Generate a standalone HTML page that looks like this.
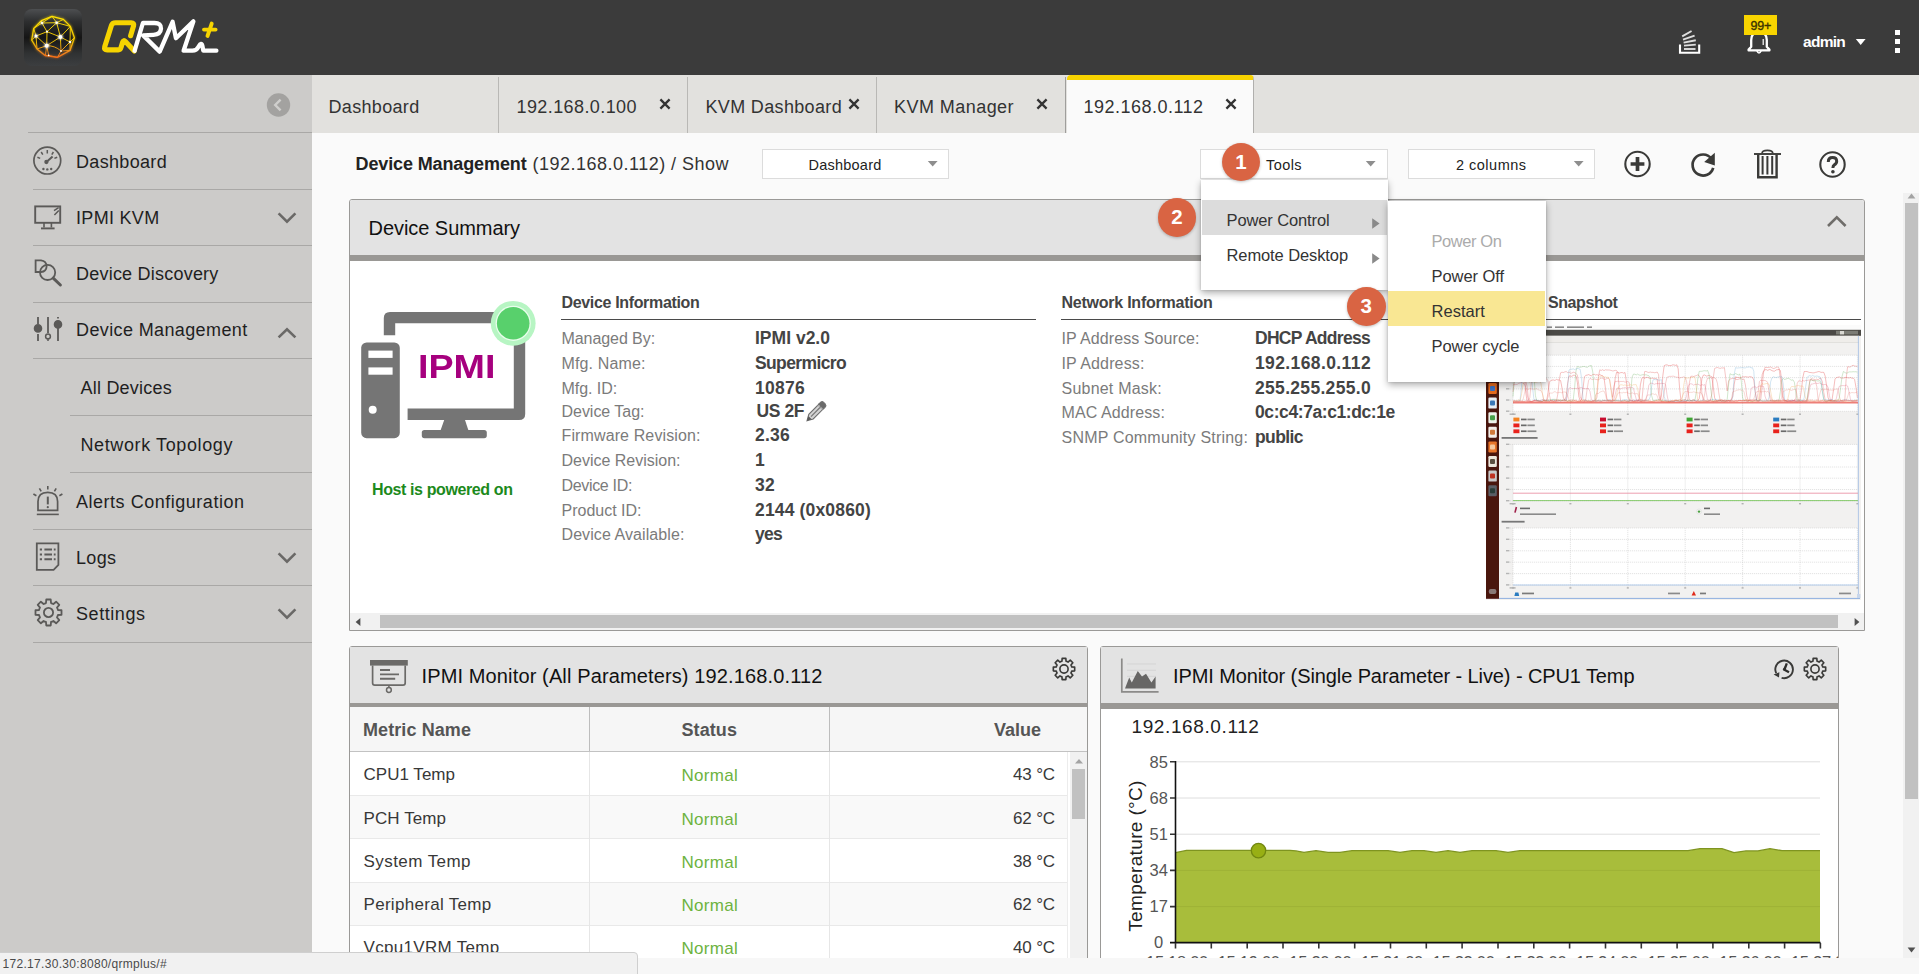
<!DOCTYPE html>
<html><head>
<meta charset="utf-8">
<title>QRM+</title>
<style>
*{box-sizing:border-box;margin:0;padding:0}
html,body{width:1919px;height:974px;overflow:hidden;background:#fafafa;font-family:"Liberation Sans",sans-serif;color:#222}
.abs{position:absolute}
#hdr{position:absolute;left:0;top:0;width:1919px;height:75px;background:#3b3b3b}
#side{position:absolute;left:0;top:75px;width:312px;height:899px;background:#cccbc9}
#tabbar{position:absolute;left:312px;top:75px;width:1607px;height:58px;background:#e2e1de}
#content{position:absolute;left:312px;top:133px;width:1607px;height:841px;background:#fafafa}
.t{position:absolute;white-space:nowrap;line-height:1}
/*SIDEBAR*/
.nav{position:absolute;left:76px;font-size:18px;color:#1f1f1f;white-space:nowrap;line-height:1}
.sep{position:absolute;height:1px;background:#a9a8a6}
/*TABS*/
.tab{position:absolute;top:78px;height:55px;font-size:18px;color:#333;line-height:1}
.tabsep{position:absolute;top:78px;width:1px;height:55px;background:#c9c8c5}
.x{position:absolute;font-size:17px;font-weight:bold;color:#333;line-height:1}
</style>
</head>
<body>
<div id="hdr"></div>
<div id="side"></div>
<div id="tabbar"></div>
<div id="content"></div>
<!--HEADER-->
<svg class="abs" style="left:24px;top:9px" width="58" height="57" viewBox="0 0 58 57">
<defs>
<linearGradient id="lgb" x1="0" y1="0" x2="0" y2="1"><stop offset="0" stop-color="#4d4f51"></stop><stop offset="0.22" stop-color="#2d2e2f"></stop><stop offset="0.5" stop-color="#151515"></stop><stop offset="0.78" stop-color="#303233"></stop><stop offset="1" stop-color="#3c3e40"></stop></linearGradient>
<linearGradient id="lgs" gradientUnits="userSpaceOnUse" x1="0" y1="7" x2="0" y2="49"><stop offset="0" stop-color="#ffe100"></stop><stop offset="0.6" stop-color="#f2c400"></stop><stop offset="0.85" stop-color="#f08a1c"></stop><stop offset="1" stop-color="#ef6a1a"></stop></linearGradient>
<filter id="glow" x="-20%" y="-20%" width="140%" height="140%"><feGaussianBlur stdDeviation="0.9"></feGaussianBlur></filter>
</defs>
<rect x="0" y="0" width="58" height="57" rx="8" fill="url(#lgb)"></rect>
<g fill="none" stroke="url(#lgs)" stroke-width="2.2" opacity="0.5" filter="url(#glow)">
<polygon points="28,7.3 39.4,10.4 46.4,17.4 50.4,28.7 46.1,41.4 33.4,48.4 21.4,46.7 13,40 7.7,31 9.7,19.4 17.4,11.7"></polygon>
</g>
<g fill="none" stroke="url(#lgs)" stroke-width="0.95" stroke-linejoin="round" gradientUnits="userSpaceOnUse">
<polygon points="28,7.3 39.4,10.4 46.4,17.4 50.4,28.7 46.1,41.4 33.4,48.4 21.4,46.7 13,40 7.7,31 9.7,19.4 17.4,11.7" stroke-width="1.3"></polygon>
<path d="M28,7.3 L18,14 M28,7.3 L32.7,13.7 M18,14 L32.7,13.7 M17.4,11.7 L18,14 M32.7,13.7 L39.4,10.4 M32.7,13.7 L46.4,17.4 M18,14 L9.7,19.4 M18,14 L23,22.7 M32.7,13.7 L23,22.7 M32.7,13.7 L36.4,28 M23,22.7 L12,27 M23,22.7 L36.4,28 M23,22.7 L22.7,36.7 M12,27 L9.7,19.4 M12,27 L7.7,31 M12,27 L22.7,36.7 M12,27 L13,40 M36.4,28 L46.4,17.4 M36.4,28 L46,33 M36.4,28 L22.7,36.7 M36.4,28 L37,42 M46,33 L50.4,28.7 M46,33 L46.4,17.4 M46,33 L46.1,41.4 M46,33 L37,42 M22.7,36.7 L13,40 M22.7,36.7 L24.7,46.4 M37,42 L33.4,48.4 M37,42 L46.1,41.4 M24.7,46.4 L21.4,46.7 M24.7,46.4 L33.4,48.4 M22.7,36.7 L21.4,46.7 M22.7,36.7 Q31,36.5 37,42"></path>
</g>
<g fill="#fff" filter="url(#glow)" opacity="0.9">
<circle cx="12" cy="27" r="2"></circle><circle cx="36.4" cy="28" r="2.5"></circle><circle cx="22.7" cy="36.7" r="2.5"></circle><circle cx="18" cy="14" r="1.5"></circle><circle cx="32.7" cy="13.7" r="1.5"></circle>
</g>
<g fill="#fff">
<circle cx="18" cy="14" r="1.1"></circle><circle cx="32.7" cy="13.7" r="1.2"></circle><circle cx="23" cy="22.7" r="1.1"></circle><circle cx="12" cy="27" r="1.5"></circle><circle cx="36.4" cy="28" r="1.9"></circle><circle cx="22.7" cy="36.7" r="1.9"></circle><circle cx="46" cy="33" r="1.3"></circle><circle cx="37" cy="42" r="0.9"></circle><circle cx="24.7" cy="46.4" r="0.8"></circle>
</g>
</svg>
<svg class="abs" style="left:96px;top:12px" width="130" height="50" viewBox="96 12 130 50">
<g fill="none" stroke-linecap="round" stroke-linejoin="round">
<path d="M130.6,35.7 L133.6,25.8 Q134.4,22.7 131.2,22.7 L115.6,22.7 Q112.3,22.7 111.5,25.2 L104.7,46.7 Q103.8,49.9 107.2,49.9 L118.3,49.9 Q120.4,49.9 121.1,47.2 L122.7,42 Q123.6,39.6 125.4,41.5 L134.3,51" stroke="#f6d400" stroke-width="5.1"></path>
<path d="M134.6,50.8 L142.9,23 L154.5,23 Q161.3,23 161,28.6 Q160.6,34.4 153.5,34.8 L143.2,35.4 L159.7,51.6 L172.6,21.8 L175.9,38.2 L193.4,21.4 L183.6,50.7 L192.4,50.7 Q196.6,50.7 198.6,46.6 Q201.4,41.6 202.4,46 L203.3,50.7 L216.4,50.7" stroke="#ffffff" stroke-width="4.3"></path>
<path d="M204,29.6 L215.6,29.6 M211.7,23.6 L207.5,36" stroke="#f6d400" stroke-width="3.9"></path>
</g>
</svg>
<!-- tray icon -->
<svg class="abs" style="left:1677px;top:28px" width="26" height="28" viewBox="1677 28 26 28">
<path d="M1680,44.5 L1680,52.8 L1699.2,52.8 L1699.2,44.5" fill="none" stroke="#fff" stroke-width="2.1"></path>
<g stroke="#dedede" stroke-width="1.9" fill="none">
<path d="M1684,49 L1695.5,49"></path><path d="M1684,45.6 L1695.8,44.6"></path><path d="M1683.6,42.6 L1695.8,40.2"></path><path d="M1683,39.6 L1694.6,35.6"></path><path d="M1682.2,36.4 L1691.6,31"></path>
</g>
</svg>
<!-- bell -->
<svg class="abs" style="left:1745px;top:30px" width="28" height="26" viewBox="1745 30 28 26">
<path d="M1751.2,46.8 L1751.2,40 Q1751.2,32.4 1759,32.4 Q1766.8,32.4 1766.8,40 L1766.8,46.8 L1769.4,49.6 L1769.4,50.4 L1748.6,50.4 L1748.6,49.6 Z" fill="none" stroke="#fff" stroke-width="2.3" stroke-linejoin="round"></path>
<path d="M1763.2,39 L1763.2,45" stroke="#fff" stroke-width="1.2"></path>
<path d="M1756.8,50.6 Q1759,55.4 1761.2,50.6" fill="none" stroke="#fff" stroke-width="1.5"></path>
</svg>
<div class="abs" style="left:1744px;top:15px;width:33px;height:20px;background:#f8d400"></div>
<span class="t" style="left: 1750.5px; top: 20px; font-size: 12.5px; color: rgb(59, 51, 0); -webkit-text-stroke: 0.35px rgb(59, 51, 0); letter-spacing: -0.24px;">99+</span>
<span class="t" style="left: 1803px; top: 33.5px; font-size: 15.5px; color: rgb(255, 255, 255); font-weight: bold; letter-spacing: -0.73px;">admin</span>
<svg class="abs" style="left:1855px;top:38px" width="12" height="8"><path d="M0.8,1 L10.6,1 L5.7,7 Z" fill="#fff"></path></svg>
<div class="abs" style="left:1895px;top:30px;width:5px;height:5px;background:#fff"></div>
<div class="abs" style="left:1895px;top:39px;width:5px;height:5px;background:#fff"></div>
<div class="abs" style="left:1895px;top:48px;width:5px;height:5px;background:#fff"></div>

<!--SIDEBAR-->
<svg class="abs" style="left:266px;top:93px" width="25" height="25" viewBox="0 0 25 25"><circle cx="12.5" cy="12" r="11.7" fill="#a3a2a0"></circle><path d="M14.6,6.6 L9.2,12 L14.6,17.4" fill="none" stroke="#cfcecc" stroke-width="2.4"></path></svg>
<div class="sep" style="left:28px;top:132px;width:284px"></div>
<div class="sep" style="left:33px;top:189px;width:279px"></div>
<div class="sep" style="left:33px;top:245px;width:279px"></div>
<div class="sep" style="left:33px;top:302px;width:279px"></div>
<div class="sep" style="left:33px;top:358px;width:279px"></div>
<div class="sep" style="left:70px;top:415px;width:242px"></div>
<div class="sep" style="left:70px;top:472px;width:242px"></div>
<div class="sep" style="left:33px;top:529px;width:279px"></div>
<div class="sep" style="left:33px;top:585px;width:279px"></div>
<div class="sep" style="left:33px;top:642px;width:279px"></div>
<span class="nav" style="top: 152.5px; letter-spacing: 0.33px;">Dashboard</span>
<span class="nav" style="top: 208.5px; letter-spacing: 0.31px;">IPMI KVM</span>
<span class="nav" style="top: 264.5px; letter-spacing: 0.22px;">Device Discovery</span>
<span class="nav" style="top: 320.5px; letter-spacing: 0.38px;">Device Management</span>
<span class="nav" style="top: 378.5px; left: 80.5px; letter-spacing: 0.22px;">All Devices</span>
<span class="nav" style="top: 435.5px; left: 80.5px; letter-spacing: 0.61px;">Network Topology</span>
<span class="nav" style="top: 492.5px; letter-spacing: 0.52px;">Alerts Configuration</span>
<span class="nav" style="top: 548.5px; letter-spacing: 0.36px;">Logs</span>
<span class="nav" style="top: 604.5px; letter-spacing: 0.56px;">Settings</span>
<svg class="abs" style="left:276px;top:211px" width="22" height="14"><path d="M2.6,2.4 L11,10.6 L19.4,2.4" fill="none" stroke="#6a6967" stroke-width="2.6"></path></svg>
<svg class="abs" style="left:276px;top:326px" width="22" height="14"><path d="M2.6,11.4 L11,3.2 L19.4,11.4" fill="none" stroke="#6a6967" stroke-width="2.6"></path></svg>
<svg class="abs" style="left:276px;top:551px" width="22" height="14"><path d="M2.6,2.4 L11,10.6 L19.4,2.4" fill="none" stroke="#6a6967" stroke-width="2.6"></path></svg>
<svg class="abs" style="left:276px;top:607px" width="22" height="14"><path d="M2.6,2.4 L11,10.6 L19.4,2.4" fill="none" stroke="#6a6967" stroke-width="2.6"></path></svg>
<!-- gauge -->
<svg class="abs" style="left:32px;top:145px" width="32" height="32" viewBox="32 145 32 32"><g fill="none" stroke="#5b5a58" stroke-width="1.7">
<circle cx="47.3" cy="160.6" r="13.4"></circle>
<path d="M47.3,150 L47.3,153.4 M41.2,152 L42.8,154.6 M53.4,152 L51.8,154.6 M37.4,157.2 L40.2,158.4 M57.2,157.2 L54.4,158.4" stroke-width="1.5"></path>
<path d="M47,161.4 L52.6,156.4" stroke-width="2"></path>
<circle cx="46.4" cy="162" r="1.3" fill="#5b5a58"></circle>
</g><g fill="#5b5a58"><circle cx="43.4" cy="169" r="1.2"></circle><circle cx="47.3" cy="169.4" r="1.2"></circle><circle cx="51.2" cy="169" r="1.2"></circle></g></svg>
<!-- monitor -->
<svg class="abs" style="left:33px;top:203px" width="30" height="28" viewBox="33 203 30 28"><g fill="none" stroke="#5b5a58" stroke-width="1.9">
<rect x="35.2" y="206.4" width="25" height="16.4"></rect>
<path d="M44,223 L44,227.6 M51.4,223 L51.4,227.6" stroke-width="1.6"></path>
<path d="M41,228.4 L54.6,228.4" stroke-width="1.9"></path>
<path d="M54,210.6 L58.6,207.6 M54.4,215 L58.8,210.4" stroke-width="1.5"></path>
</g></svg>
<!-- discovery -->
<svg class="abs" style="left:33px;top:257px" width="31" height="31" viewBox="33 257 31 31"><g fill="none" stroke="#5b5a58" stroke-width="1.8">
<path d="M35.6,260.4 L41,260.4 Q46.4,261 46.6,266.4 Q46.4,271.6 41,272 L35.6,272 Z"></path>
<circle cx="47.6" cy="272.4" r="7.6"></circle>
<path d="M53.2,278.2 L60.4,285" stroke-width="3" stroke-linecap="round"></path>
</g></svg>
<!-- sliders -->
<svg class="abs" style="left:33px;top:314px" width="31" height="30" viewBox="33 314 31 30"><g fill="none" stroke="#5b5a58" stroke-width="1.8">
<path d="M38,317 L38,324 M38,334 L38,341"></path><circle cx="38" cy="328.4" r="3.4" fill="#5b5a58"></circle>
<path d="M48,317 L48,333"></path><circle cx="48" cy="336.4" r="2.4" stroke-width="1.5"></circle><path d="M48,339 L48,341" stroke-width="1.5"></path>
<path d="M58,317 L58,318.6 M58,328 L58,341"></path><circle cx="58" cy="324.4" r="3.4" fill="#5b5a58"></circle>
</g></svg>
<!-- alert -->
<svg class="abs" style="left:31px;top:484px" width="34" height="33" viewBox="31 484 34 33"><g fill="none" stroke="#5b5a58" stroke-width="1.7">
<path d="M38,510.4 L38,501.6 Q38,492.4 47.8,492.4 Q57.6,492.4 57.6,501.6 L57.6,510.4 Z"></path>
<path d="M36.8,514.4 L58.8,514.4" stroke-width="1.6"></path>
<path d="M47.8,486 L47.8,489.4 M39.4,488.4 L41.2,491.4 M56.2,488.4 L54.4,491.4 M33.4,494 L36.4,495.8 M62.4,494 L59.4,495.8" stroke-width="1.6"></path>
<path d="M47.8,496.6 L47.8,504.4" stroke-width="2"></path><circle cx="47.8" cy="507.2" r="1.1" fill="#5b5a58" stroke="none"></circle>
</g></svg>
<!-- logs -->
<svg class="abs" style="left:34px;top:540px" width="28" height="33" viewBox="34 540 28 33"><g fill="none" stroke="#5b5a58" stroke-width="1.8">
<path d="M36.8,543.4 L58.4,543.4 L58.4,565 L53.6,569.8 L36.8,569.8 Z"></path>
<path d="M39.8,549.6 L42,549.6 M44.4,549.6 L52,549.6 M53.8,549.6 L55.6,549.6 M39.8,554.4 L42,554.4 M44.4,554.4 L52,554.4 M53.8,554.4 L55.6,554.4 M39.8,559.2 L42,559.2 M44.4,559.2 L52,559.2 M53.8,559.2 L55.6,559.2" stroke-width="2"></path>
</g></svg>
<!-- settings gear -->
<svg class="abs" style="left:33px;top:597px" width="31" height="31" viewBox="-15.5 -15.5 31 31"><g fill="none" stroke="#5b5a58" stroke-width="1.8" stroke-linejoin="round"><path d="M-2.52,-9.47 L-2.23,-13.01 L2.23,-13.01 L2.52,-9.47 A9.80,9.80 0 0 1 4.92,-8.48 L7.62,-10.78 L10.78,-7.62 L8.48,-4.92 A9.80,9.80 0 0 1 9.47,-2.52 L13.01,-2.23 L13.01,2.23 L9.47,2.52 A9.80,9.80 0 0 1 8.48,4.92 L10.78,7.62 L7.62,10.78 L4.92,8.48 A9.80,9.80 0 0 1 2.52,9.47 L2.23,13.01 L-2.23,13.01 L-2.52,9.47 A9.80,9.80 0 0 1 -4.92,8.48 L-7.62,10.78 L-10.78,7.62 L-8.48,4.92 A9.80,9.80 0 0 1 -9.47,2.52 L-13.01,2.23 L-13.01,-2.23 L-9.47,-2.52 A9.80,9.80 0 0 1 -8.48,-4.92 L-10.78,-7.62 L-7.62,-10.78 L-4.92,-8.48 A9.80,9.80 0 0 1 -2.52,-9.47 Z"></path><circle cx="0" cy="0" r="4.6"></circle></g></svg>

<!--TABS-->
<div class="abs" style="left:498px;top:77px;width:1px;height:56px;background:#b9b8b5"></div>
<div class="abs" style="left:687px;top:77px;width:1px;height:56px;background:#b9b8b5"></div>
<div class="abs" style="left:876px;top:77px;width:1px;height:56px;background:#b9b8b5"></div>
<div class="abs" style="left:1064.5px;top:77px;width:1.6px;height:56px;background:#9f9e9c"></div>
<div class="abs" style="left:1067px;top:75px;width:187px;height:58px;background:#fafafa;border-top:5px solid #f7d200;border-radius:4px 4px 0 0;border-right:1px solid #b0afad"></div>
<span class="t" style="left: 328.5px; top: 97.5px; font-size: 18px; color: rgb(51, 51, 51); letter-spacing: 0.33px;">Dashboard</span>
<span class="t" style="left: 516.5px; top: 97.5px; font-size: 18px; color: rgb(51, 51, 51); letter-spacing: 0.41px;">192.168.0.100</span>
<span class="t" style="left: 705.5px; top: 97.5px; font-size: 18px; color: rgb(51, 51, 51); letter-spacing: 0.34px;">KVM Dashboard</span>
<span class="t" style="left: 894px; top: 97.5px; font-size: 18px; color: rgb(51, 51, 51); letter-spacing: 0.45px;">KVM Manager</span>
<span class="t" style="left: 1083.5px; top: 97.5px; font-size: 18px; color: rgb(51, 51, 51); letter-spacing: 0.48px;">192.168.0.112</span>
<svg class="abs" style="left:658px;top:97px" width="14" height="14" viewBox="-7 -7 14 14"><path d="M-4.6,-4.6 L4.6,4.6 M4.6,-4.6 L-4.6,4.6" stroke="#333" stroke-width="2.3" fill="none"></path></svg><svg class="abs" style="left:846.5px;top:97px" width="14" height="14" viewBox="-7 -7 14 14"><path d="M-4.6,-4.6 L4.6,4.6 M4.6,-4.6 L-4.6,4.6" stroke="#333" stroke-width="2.3" fill="none"></path></svg><svg class="abs" style="left:1035px;top:97px" width="14" height="14" viewBox="-7 -7 14 14"><path d="M-4.6,-4.6 L4.6,4.6 M4.6,-4.6 L-4.6,4.6" stroke="#333" stroke-width="2.3" fill="none"></path></svg><svg class="abs" style="left:1224px;top:97px" width="14" height="14" viewBox="-7 -7 14 14"><path d="M-4.6,-4.6 L4.6,4.6 M4.6,-4.6 L-4.6,4.6" stroke="#333" stroke-width="2.3" fill="none"></path></svg>

<!--TOOLBAR-->
<span class="t" style="left: 355.5px; top: 154.5px; font-size: 18px; color: rgb(34, 34, 34); font-weight: bold; letter-spacing: -0.12px;">Device Management</span>
<span class="t" style="left: 532.5px; top: 154.5px; font-size: 18px; color: rgb(51, 51, 51); letter-spacing: 0.49px;">(192.168.0.112) / Show</span>
<div class="abs" style="left:762px;top:149px;width:187px;height:30px;background:#fff;border:1px solid #dcdcdc"></div>
<span class="t" style="left: 808.5px; top: 157.5px; font-size: 14.5px; color: rgb(34, 34, 34); letter-spacing: 0.23px;">Dashboard</span>
<svg class="abs" style="left:926.5px;top:160px" width="12" height="8"><path d="M0.8,1 L10.6,1 L5.7,6.4 Z" fill="#8e8e8e"></path></svg>
<div class="abs" style="left:1200px;top:149px;width:188px;height:30px;background:#fff;border:1px solid #dcdcdc"></div>
<span class="t" style="left: 1266px; top: 157.5px; font-size: 14.5px; color: rgb(34, 34, 34); letter-spacing: 0.43px;">Tools</span>
<svg class="abs" style="left:1365px;top:160px" width="12" height="8"><path d="M0.8,1 L10.6,1 L5.7,6.4 Z" fill="#8e8e8e"></path></svg>
<div class="abs" style="left:1408px;top:149px;width:187px;height:30px;background:#fff;border:1px solid #dcdcdc"></div>
<span class="t" style="left: 1456px; top: 157.5px; font-size: 14.5px; color: rgb(34, 34, 34); letter-spacing: 0.49px;">2 columns</span>
<svg class="abs" style="left:1573px;top:160px" width="12" height="8"><path d="M0.8,1 L10.6,1 L5.7,6.4 Z" fill="#8e8e8e"></path></svg>

<!-- plus -->
<svg class="abs" style="left:1622px;top:149px" width="31" height="31" viewBox="-15.5 -15.5 31 31"><circle cx="0" cy="-0.5" r="12.2" fill="none" stroke="#3a3a38" stroke-width="2.1"></circle><path d="M-6.9,-0.5 L6.9,-0.5 M0,-7.4 L0,6.4" stroke="#3a3a38" stroke-width="3.7"></path></svg>
<!-- refresh -->
<svg class="abs" style="left:1687px;top:149px" width="32" height="32" viewBox="1687 149 32 32"><path d="M1711.4,158.6 A10.5,10.5 0 1 0 1713.2,167.8" fill="none" stroke="#3a3a38" stroke-width="2.7"></path><path d="M1714.8,152.8 L1714.8,165.6 L1704.2,162 Z" fill="#3a3a38"></path></svg>
<!-- trash -->
<svg class="abs" style="left:1752px;top:148px" width="31" height="32" viewBox="1752 148 31 32"><g fill="none" stroke="#3a3a38">
<path d="M1754,154 L1781,154" stroke-width="1.9"></path>
<path d="M1762,153.6 Q1762,150.4 1767.4,150.4 Q1772.8,150.4 1772.8,153.6" stroke-width="1.7"></path>
<path d="M1758.2,154.6 L1758.2,177.3 L1776.6,177.3 L1776.6,154.6" stroke-width="2.4"></path>
<path d="M1762.6,156 L1762.6,174.4 M1767.4,156 L1767.4,174.4 M1772.2,156 L1772.2,174.4" stroke-width="2"></path>
</g></svg>
<!-- help -->
<svg class="abs" style="left:1817px;top:149px" width="31" height="31" viewBox="-15.5 -15.5 31 31"><circle cx="0" cy="0" r="12.2" fill="none" stroke="#3a3a38" stroke-width="2.1"></circle><path d="M-4.2,-2.6 Q-4.2,-7 0,-7 Q4.2,-7 4.2,-3.2 Q4.2,-1 1.8,0.4 Q0.4,1.2 0.4,3.6" fill="none" stroke="#3a3a38" stroke-width="3"></path><circle cx="0.4" cy="7.2" r="1.8" fill="#3a3a38"></circle></svg>

<!--SUMMARY-->
<div class="abs" style="left:349px;top:199px;width:1516px;height:432px;background:#fff;border:1px solid #9a9997;border-radius:3px 3px 0 0"></div>
<div class="abs" style="left:350px;top:200px;width:1514px;height:55px;background:#e3e3e3;border-radius:2px 2px 0 0"></div>
<div class="abs" style="left:350px;top:255px;width:1514px;height:6px;background:#9a9895"></div>
<span class="t" style="left: 368.5px; top: 218.1px; font-size: 20px; color: rgb(17, 17, 17); letter-spacing: -0.05px;">Device Summary</span>
<svg class="abs" style="left:1825px;top:214px" width="24" height="16"><path d="M3,12 L11.8,3.4 L20.6,12" fill="none" stroke="#6f6d6a" stroke-width="2.6"></path></svg>
<!-- device image -->
<svg class="abs" style="left:355px;top:296px" width="190" height="150" viewBox="355 296 190 150">
<path d="M383.8,335.2 L383.8,318 Q383.8,311.9 390,311.9 L519,311.9 Q525.2,311.9 525.2,318 L525.2,414 Q525.2,420 519,420 L407.6,420 L407.6,408.4 L513.8,408.4 L513.8,323.3 L395.2,323.3 L395.2,335.2 Z" fill="#757575"></path>
<path d="M444.2,420 L465,420 L468.4,430.2 L440.6,430.2 Z" fill="#757575"></path>
<rect x="421.8" y="430" width="65" height="8.2" rx="2.6" fill="#757575"></rect>
<rect x="361.2" y="342.4" width="38.6" height="95.8" rx="5.4" fill="#757575"></rect>
<rect x="368.4" y="350.6" width="24.2" height="7.3" fill="#fff"></rect>
<rect x="368.4" y="367.4" width="24.2" height="7.3" fill="#fff"></rect>
<circle cx="372.7" cy="409.8" r="4" fill="#fff"></circle>
<circle cx="513.2" cy="323.3" r="22.4" fill="#b7f5c3"></circle>
<circle cx="513.2" cy="323.3" r="17.6" fill="#e9fdec"></circle>
<circle cx="513.2" cy="323.3" r="16.3" fill="#58d06c"></circle>
</svg>
<span class="t" style="left:417.5px;top:349.8px;font-size:33.5px;color:#a6007e;font-weight:bold;transform:scaleX(1.125);transform-origin:0 0">IPMI</span>
<span class="t" style="left: 372px; top: 482.1px; font-size: 16px; color: rgb(28, 138, 28); font-weight: bold; letter-spacing: -0.39px;">Host is powered on</span>
<span class="t" style="left: 561.5px; top: 295.3px; font-size: 16px; color: rgb(68, 68, 68); font-weight: bold; letter-spacing: -0.34px;">Device Information</span>
<div class="abs" style="left:561px;top:319px;width:475px;height:1px;background:#4a4a4a"></div>
<span class="t" style="left: 1061.5px; top: 295.3px; font-size: 16px; color: rgb(68, 68, 68); font-weight: bold; letter-spacing: -0.24px;">Network Information</span>
<div class="abs" style="left:1061px;top:319px;width:400px;height:1px;background:#4a4a4a"></div>
<span class="t" style="left: 1548px; top: 295.3px; font-size: 16px; color: rgb(68, 68, 68); font-weight: bold; letter-spacing: -0.42px;">Snapshot</span>
<div class="abs" style="left:1486px;top:319px;width:375px;height:1px;background:#4a4a4a"></div>
<span class="t" style="left: 561.5px; top: 330.7px; font-size: 16px; color: rgb(123, 123, 123); letter-spacing: -0.07px;">Managed By:</span>
<span class="t" style="left: 561.5px; top: 355.7px; font-size: 16px; color: rgb(123, 123, 123); letter-spacing: 0.13px;">Mfg. Name:</span>
<span class="t" style="left: 561.5px; top: 380.7px; font-size: 16px; color: rgb(123, 123, 123); letter-spacing: -0.06px;">Mfg. ID:</span>
<span class="t" style="left: 561.5px; top: 403.7px; font-size: 16px; color: rgb(123, 123, 123); letter-spacing: -0.03px;">Device Tag:</span>
<span class="t" style="left: 561.5px; top: 427.7px; font-size: 16px; color: rgb(123, 123, 123); letter-spacing: 0.12px;">Firmware Revision:</span>
<span class="t" style="left: 561.5px; top: 452.7px; font-size: 16px; color: rgb(123, 123, 123); letter-spacing: -0.01px;">Device Revision:</span>
<span class="t" style="left: 561.5px; top: 477.7px; font-size: 16px; color: rgb(123, 123, 123); letter-spacing: -0.33px;">Device ID:</span>
<span class="t" style="left: 561.5px; top: 502.7px; font-size: 16px; color: rgb(123, 123, 123); letter-spacing: 0px;">Product ID:</span>
<span class="t" style="left: 561.5px; top: 526.7px; font-size: 16px; color: rgb(123, 123, 123); letter-spacing: 0.08px;">Device Available:</span>
<span class="t" style="left: 755px; top: 330.25px; font-size: 17.5px; color: rgb(68, 68, 68); font-weight: bold; letter-spacing: 0.01px;">IPMI v2.0</span>
<span class="t" style="left: 755px; top: 355.25px; font-size: 17.5px; color: rgb(68, 68, 68); font-weight: bold; letter-spacing: -0.62px;">Supermicro</span>
<span class="t" style="left: 755px; top: 380.25px; font-size: 17.5px; color: rgb(68, 68, 68); font-weight: bold; letter-spacing: 0.27px;">10876</span>
<span class="t" style="left: 755px; top: 427.25px; font-size: 17.5px; color: rgb(68, 68, 68); font-weight: bold; letter-spacing: 0.23px;">2.36</span>
<span class="t" style="left: 755px; top: 452.25px; font-size: 17.5px; color: rgb(68, 68, 68); font-weight: bold; letter-spacing: -1.73px;">1</span>
<span class="t" style="left: 755px; top: 477.25px; font-size: 17.5px; color: rgb(68, 68, 68); font-weight: bold; letter-spacing: 0.27px;">32</span>
<span class="t" style="left: 755px; top: 502.25px; font-size: 17.5px; color: rgb(68, 68, 68); font-weight: bold; letter-spacing: 0.16px;">2144 (0x0860)</span>
<span class="t" style="left: 755px; top: 526.25px; font-size: 17.5px; color: rgb(68, 68, 68); font-weight: bold; letter-spacing: -0.73px;">yes</span>
<span class="t" style="left: 756.5px; top: 403.25px; font-size: 17.5px; color: rgb(68, 68, 68); font-weight: bold; letter-spacing: -0.42px;">US 2F</span>
<svg class="abs" style="left:805px;top:399px" width="24" height="24" viewBox="805 399 24 24"><g fill="none" stroke="#6e6e6e" stroke-width="1.1">
<path d="M807,420.8 L808.8,414.4 L819,404 L823.6,408.6 L813.2,419 Z" fill="#d4d4d4"></path>
<path d="M811,416.6 L821.2,406.2" stroke="#7a7a7a" stroke-width="1.3"></path>
<path d="M819,404 L820.8,402.2 Q822.2,401 823.6,402.4 L825.2,404 Q826.6,405.6 825.4,406.8 L823.6,408.6 Z" fill="#6a6a6a"></path>
<path d="M817.8,405.2 L822.4,409.8" stroke="#9a9a9a" stroke-width="0.9"></path>
<path d="M807,420.8 L808.4,416 L811.6,419.2 Z" fill="#5a5a5a" stroke="none"></path>
</g></svg>
<span class="t" style="left: 1061.5px; top: 330.7px; font-size: 16px; color: rgb(123, 123, 123); letter-spacing: 0.07px;">IP Address Source:</span>
<span class="t" style="left: 1061.5px; top: 355.7px; font-size: 16px; color: rgb(123, 123, 123); letter-spacing: 0.13px;">IP Address:</span>
<span class="t" style="left: 1061.5px; top: 380.7px; font-size: 16px; color: rgb(123, 123, 123); letter-spacing: 0.22px;">Subnet Mask:</span>
<span class="t" style="left: 1061.5px; top: 404.7px; font-size: 16px; color: rgb(123, 123, 123); letter-spacing: 0.1px;">MAC Address:</span>
<span class="t" style="left: 1061.5px; top: 429.7px; font-size: 16px; color: rgb(123, 123, 123); letter-spacing: 0.21px;">SNMP Community String:</span>
<span class="t" style="left: 1255px; top: 330.25px; font-size: 17.5px; color: rgb(68, 68, 68); font-weight: bold; letter-spacing: -0.71px;">DHCP Address</span>
<span class="t" style="left: 1255px; top: 355.25px; font-size: 17.5px; color: rgb(68, 68, 68); font-weight: bold; letter-spacing: 0.39px;">192.168.0.112</span>
<span class="t" style="left: 1255px; top: 380.25px; font-size: 17.5px; color: rgb(68, 68, 68); font-weight: bold; letter-spacing: 0.31px;">255.255.255.0</span>
<span class="t" style="left: 1255px; top: 404.25px; font-size: 17.5px; color: rgb(68, 68, 68); font-weight: bold; letter-spacing: -0.41px;">0c:c4:7a:c1:dc:1e</span>
<span class="t" style="left: 1255px; top: 429.25px; font-size: 17.5px; color: rgb(68, 68, 68); font-weight: bold; letter-spacing: -0.59px;">public</span>
<div class="abs" style="left:350px;top:613px;width:1514px;height:17px;background:#f1f1f1"></div>
<div class="abs" style="left:380px;top:615px;width:1458px;height:13px;background:#c1c1c1"></div>
<svg class="abs" style="left:354px;top:616.5px" width="8" height="10"><path d="M6.4,1 L6.4,9 L1.6,5 Z" fill="#505050"></path></svg>
<svg class="abs" style="left:1852.5px;top:616.5px" width="8" height="10"><path d="M1.6,1 L1.6,9 L6.4,5 Z" fill="#505050"></path></svg>

<!--SNAP-->
<svg class="abs" style="left:1486px;top:325px" width="375" height="275" viewBox="1486 325 375 275">
<defs><filter id="sb" x="-2%" y="-2%" width="104%" height="104%"><feGaussianBlur stdDeviation="0.45"></feGaussianBlur></filter></defs>
<rect x="1486" y="325" width="375" height="275" fill="#f2f1f0"></rect>
<g filter="url(#sb)">
<rect x="1486" y="325" width="375" height="5" fill="#fbfbfb"></rect>
<rect x="1547" y="326.4" width="5" height="1.6" fill="#8a8a8a"></rect>
<rect x="1555" y="326.4" width="9" height="1.6" fill="#8a8a8a"></rect>
<rect x="1567" y="326.4" width="17" height="1.6" fill="#8a8a8a"></rect>
<rect x="1587" y="326.4" width="5" height="1.6" fill="#8a8a8a"></rect>
<rect x="1486" y="329.8" width="375" height="6" fill="#4b4a45"></rect>
<rect x="1836" y="330.8" width="22" height="3.6" fill="#7c7b74"></rect>
<rect x="1840" y="331" width="4" height="3.4" fill="#d9d8d2"></rect>
<rect x="1499" y="335.8" width="360" height="6.6" fill="#efedea"></rect>
<rect x="1499" y="342.4" width="360" height="0.6" fill="#d8d6d2"></rect>
<rect x="1486" y="335.8" width="13" height="263" fill="#4a1511"></rect>
<rect x="1488.4" y="383" width="8.4" height="11" rx="1.2" fill="#e66a1f"></rect>
<rect x="1490" y="386" width="5" height="5" rx="1" fill="#3a6fc0"></rect>
<rect x="1488.4" y="397.6" width="8.4" height="11" rx="1.2" fill="#e8eef5"></rect>
<rect x="1490" y="400.6" width="5" height="5" rx="1" fill="#3b78b8"></rect>
<rect x="1488.4" y="412.20000000000005" width="8.4" height="11" rx="1.2" fill="#eef3ea"></rect>
<rect x="1490" y="415.20000000000005" width="5" height="5" rx="1" fill="#4aa04a"></rect>
<rect x="1488.4" y="426.80000000000007" width="8.4" height="11" rx="1.2" fill="#f3eee8"></rect>
<rect x="1490" y="429.80000000000007" width="5" height="5" rx="1" fill="#d07a3a"></rect>
<rect x="1488.4" y="441.4000000000001" width="8.4" height="11" rx="1.2" fill="#e8762a"></rect>
<rect x="1490" y="444.4000000000001" width="5" height="5" rx="1" fill="#f5c9a0"></rect>
<rect x="1488.4" y="456.0000000000001" width="8.4" height="11" rx="1.2" fill="#ece7dc"></rect>
<rect x="1490" y="459.0000000000001" width="5" height="5" rx="1" fill="#5a5040"></rect>
<rect x="1488.4" y="470.60000000000014" width="8.4" height="11" rx="1.2" fill="#c8c8c8"></rect>
<rect x="1490" y="473.60000000000014" width="5" height="5" rx="1" fill="#c03020"></rect>
<rect x="1488.4" y="485.20000000000016" width="8.4" height="11" rx="1.2" fill="#5a5f66"></rect>
<rect x="1490" y="488.20000000000016" width="5" height="5" rx="1" fill="#2c3c38"></rect>
<rect x="1488.8" y="589" width="7.6" height="5" rx="2" fill="#8a7a78"></rect>
<rect x="1488" y="342" width="9" height="38" fill="#3a0f0c"></rect>
<rect x="1513" y="355.2" width="345" height="56.10000000000002" fill="#ffffff"></rect>
<path d="M1510,355.2 L1858,355.2" stroke="#c9c9c9" stroke-width="0.5" stroke-dasharray="1.2,0.8"></path>
<rect x="1506" y="354.4" width="3.4" height="1.4" fill="#b5b5b5"></rect>
<path d="M1510,366.4 L1858,366.4" stroke="#c9c9c9" stroke-width="0.5" stroke-dasharray="1.2,0.8"></path>
<rect x="1506" y="365.6" width="3.4" height="1.4" fill="#b5b5b5"></rect>
<path d="M1510,377.6 L1858,377.6" stroke="#c9c9c9" stroke-width="0.5" stroke-dasharray="1.2,0.8"></path>
<rect x="1506" y="376.8" width="3.4" height="1.4" fill="#b5b5b5"></rect>
<path d="M1510,388.9 L1858,388.9" stroke="#c9c9c9" stroke-width="0.5" stroke-dasharray="1.2,0.8"></path>
<rect x="1506" y="388.1" width="3.4" height="1.4" fill="#b5b5b5"></rect>
<path d="M1510,400.1 L1858,400.1" stroke="#c9c9c9" stroke-width="0.5" stroke-dasharray="1.2,0.8"></path>
<rect x="1506" y="399.3" width="3.4" height="1.4" fill="#b5b5b5"></rect>
<path d="M1510,411.3 L1858,411.3" stroke="#c9c9c9" stroke-width="0.5" stroke-dasharray="1.2,0.8"></path>
<rect x="1506" y="410.5" width="3.4" height="1.4" fill="#b5b5b5"></rect>
<path d="M1513.0,355.2 L1513.0,412.90000000000003" stroke="#c9c9c9" stroke-width="0.5" stroke-dasharray="1.2,0.8"></path>
<rect x="1512.0" y="413.5" width="2" height="1.4" fill="#b0b0b0"></rect>
<path d="M1570.4,355.2 L1570.4,412.90000000000003" stroke="#c9c9c9" stroke-width="0.5" stroke-dasharray="1.2,0.8"></path>
<rect x="1569.4" y="413.5" width="2" height="1.4" fill="#b0b0b0"></rect>
<path d="M1627.8,355.2 L1627.8,412.90000000000003" stroke="#c9c9c9" stroke-width="0.5" stroke-dasharray="1.2,0.8"></path>
<rect x="1626.8" y="413.5" width="2" height="1.4" fill="#b0b0b0"></rect>
<path d="M1685.2,355.2 L1685.2,412.90000000000003" stroke="#c9c9c9" stroke-width="0.5" stroke-dasharray="1.2,0.8"></path>
<rect x="1684.2" y="413.5" width="2" height="1.4" fill="#b0b0b0"></rect>
<path d="M1742.6,355.2 L1742.6,412.90000000000003" stroke="#c9c9c9" stroke-width="0.5" stroke-dasharray="1.2,0.8"></path>
<rect x="1741.6" y="413.5" width="2" height="1.4" fill="#b0b0b0"></rect>
<path d="M1800.0,355.2 L1800.0,412.90000000000003" stroke="#c9c9c9" stroke-width="0.5" stroke-dasharray="1.2,0.8"></path>
<rect x="1799.0" y="413.5" width="2" height="1.4" fill="#b0b0b0"></rect>
<path d="M1857.4,355.2 L1857.4,412.90000000000003" stroke="#c9c9c9" stroke-width="0.5" stroke-dasharray="1.2,0.8"></path>
<rect x="1856.4" y="413.5" width="2" height="1.4" fill="#b0b0b0"></rect>
<rect x="1509.6" y="413.5" width="6" height="1.4" fill="#b0b0b0"></rect>
<rect x="1513" y="444.4" width="345" height="56.400000000000034" fill="#ffffff"></rect>
<path d="M1510,444.4 L1858,444.4" stroke="#c9c9c9" stroke-width="0.5" stroke-dasharray="1.2,0.8"></path>
<rect x="1506" y="443.6" width="3.4" height="1.4" fill="#b5b5b5"></rect>
<path d="M1510,455.7 L1858,455.7" stroke="#c9c9c9" stroke-width="0.5" stroke-dasharray="1.2,0.8"></path>
<rect x="1506" y="454.9" width="3.4" height="1.4" fill="#b5b5b5"></rect>
<path d="M1510,467.0 L1858,467.0" stroke="#c9c9c9" stroke-width="0.5" stroke-dasharray="1.2,0.8"></path>
<rect x="1506" y="466.2" width="3.4" height="1.4" fill="#b5b5b5"></rect>
<path d="M1510,478.2 L1858,478.2" stroke="#c9c9c9" stroke-width="0.5" stroke-dasharray="1.2,0.8"></path>
<rect x="1506" y="477.4" width="3.4" height="1.4" fill="#b5b5b5"></rect>
<path d="M1510,489.5 L1858,489.5" stroke="#c9c9c9" stroke-width="0.5" stroke-dasharray="1.2,0.8"></path>
<rect x="1506" y="488.7" width="3.4" height="1.4" fill="#b5b5b5"></rect>
<path d="M1510,500.8 L1858,500.8" stroke="#c9c9c9" stroke-width="0.5" stroke-dasharray="1.2,0.8"></path>
<rect x="1506" y="500.0" width="3.4" height="1.4" fill="#b5b5b5"></rect>
<path d="M1513.0,444.4 L1513.0,502.40000000000003" stroke="#c9c9c9" stroke-width="0.5" stroke-dasharray="1.2,0.8"></path>
<rect x="1512.0" y="503.0" width="2" height="1.4" fill="#b0b0b0"></rect>
<path d="M1570.4,444.4 L1570.4,502.40000000000003" stroke="#c9c9c9" stroke-width="0.5" stroke-dasharray="1.2,0.8"></path>
<rect x="1569.4" y="503.0" width="2" height="1.4" fill="#b0b0b0"></rect>
<path d="M1627.8,444.4 L1627.8,502.40000000000003" stroke="#c9c9c9" stroke-width="0.5" stroke-dasharray="1.2,0.8"></path>
<rect x="1626.8" y="503.0" width="2" height="1.4" fill="#b0b0b0"></rect>
<path d="M1685.2,444.4 L1685.2,502.40000000000003" stroke="#c9c9c9" stroke-width="0.5" stroke-dasharray="1.2,0.8"></path>
<rect x="1684.2" y="503.0" width="2" height="1.4" fill="#b0b0b0"></rect>
<path d="M1742.6,444.4 L1742.6,502.40000000000003" stroke="#c9c9c9" stroke-width="0.5" stroke-dasharray="1.2,0.8"></path>
<rect x="1741.6" y="503.0" width="2" height="1.4" fill="#b0b0b0"></rect>
<path d="M1800.0,444.4 L1800.0,502.40000000000003" stroke="#c9c9c9" stroke-width="0.5" stroke-dasharray="1.2,0.8"></path>
<rect x="1799.0" y="503.0" width="2" height="1.4" fill="#b0b0b0"></rect>
<path d="M1857.4,444.4 L1857.4,502.40000000000003" stroke="#c9c9c9" stroke-width="0.5" stroke-dasharray="1.2,0.8"></path>
<rect x="1856.4" y="503.0" width="2" height="1.4" fill="#b0b0b0"></rect>
<rect x="1509.6" y="503.0" width="6" height="1.4" fill="#b0b0b0"></rect>
<rect x="1513" y="528" width="345" height="57" fill="#ffffff"></rect>
<path d="M1510,528.0 L1858,528.0" stroke="#c9c9c9" stroke-width="0.5" stroke-dasharray="1.2,0.8"></path>
<rect x="1506" y="527.2" width="3.4" height="1.4" fill="#b5b5b5"></rect>
<path d="M1510,539.4 L1858,539.4" stroke="#c9c9c9" stroke-width="0.5" stroke-dasharray="1.2,0.8"></path>
<rect x="1506" y="538.6" width="3.4" height="1.4" fill="#b5b5b5"></rect>
<path d="M1510,550.8 L1858,550.8" stroke="#c9c9c9" stroke-width="0.5" stroke-dasharray="1.2,0.8"></path>
<rect x="1506" y="550.0" width="3.4" height="1.4" fill="#b5b5b5"></rect>
<path d="M1510,562.2 L1858,562.2" stroke="#c9c9c9" stroke-width="0.5" stroke-dasharray="1.2,0.8"></path>
<rect x="1506" y="561.4" width="3.4" height="1.4" fill="#b5b5b5"></rect>
<path d="M1510,573.6 L1858,573.6" stroke="#c9c9c9" stroke-width="0.5" stroke-dasharray="1.2,0.8"></path>
<rect x="1506" y="572.8" width="3.4" height="1.4" fill="#b5b5b5"></rect>
<path d="M1510,585.0 L1858,585.0" stroke="#c9c9c9" stroke-width="0.5" stroke-dasharray="1.2,0.8"></path>
<rect x="1506" y="584.2" width="3.4" height="1.4" fill="#b5b5b5"></rect>
<path d="M1513.0,528 L1513.0,586.6" stroke="#c9c9c9" stroke-width="0.5" stroke-dasharray="1.2,0.8"></path>
<rect x="1512.0" y="587.2" width="2" height="1.4" fill="#b0b0b0"></rect>
<path d="M1570.4,528 L1570.4,586.6" stroke="#c9c9c9" stroke-width="0.5" stroke-dasharray="1.2,0.8"></path>
<rect x="1569.4" y="587.2" width="2" height="1.4" fill="#b0b0b0"></rect>
<path d="M1627.8,528 L1627.8,586.6" stroke="#c9c9c9" stroke-width="0.5" stroke-dasharray="1.2,0.8"></path>
<rect x="1626.8" y="587.2" width="2" height="1.4" fill="#b0b0b0"></rect>
<path d="M1685.2,528 L1685.2,586.6" stroke="#c9c9c9" stroke-width="0.5" stroke-dasharray="1.2,0.8"></path>
<rect x="1684.2" y="587.2" width="2" height="1.4" fill="#b0b0b0"></rect>
<path d="M1742.6,528 L1742.6,586.6" stroke="#c9c9c9" stroke-width="0.5" stroke-dasharray="1.2,0.8"></path>
<rect x="1741.6" y="587.2" width="2" height="1.4" fill="#b0b0b0"></rect>
<path d="M1800.0,528 L1800.0,586.6" stroke="#c9c9c9" stroke-width="0.5" stroke-dasharray="1.2,0.8"></path>
<rect x="1799.0" y="587.2" width="2" height="1.4" fill="#b0b0b0"></rect>
<path d="M1857.4,528 L1857.4,586.6" stroke="#c9c9c9" stroke-width="0.5" stroke-dasharray="1.2,0.8"></path>
<rect x="1856.4" y="587.2" width="2" height="1.4" fill="#b0b0b0"></rect>
<rect x="1509.6" y="587.2" width="6" height="1.4" fill="#b0b0b0"></rect>
<path d="M1513.0,380.1 L1514.4,368.4 L1515.8,367.5 L1517.2,367.2 L1518.6,367.1 L1520.0,367.7 L1521.4,367.7 L1522.8,368.5 L1524.2,370.0 L1525.6,391.3 L1527.0,400.8 L1528.4,401.5 L1529.8,401.3 L1531.2,401.6 L1532.6,401.5 L1534.0,400.4 L1535.4,400.2 L1536.8,400.3 L1538.2,400.7 L1539.6,401.4 L1541.0,401.9 L1542.4,401.3 L1543.8,400.3 L1545.2,400.1 L1546.6,400.9 L1548.0,392.6 L1549.4,382.1 L1550.8,380.5 L1552.2,380.1 L1553.6,380.0 L1555.0,380.5 L1556.4,379.4 L1557.8,379.9 L1559.2,380.0 L1560.6,380.6 L1562.0,387.9 L1563.4,398.0 L1564.8,400.0 L1566.2,396.4 L1567.6,383.6 L1569.0,375.9 L1570.4,376.1 L1571.8,376.4 L1573.2,375.3 L1574.6,375.3 L1576.0,376.0 L1577.4,382.7 L1578.8,396.4 L1580.2,401.0 L1581.6,399.2 L1583.0,388.9 L1584.4,376.9 L1585.8,375.3 L1587.2,375.1 L1588.6,374.6 L1590.0,375.3 L1591.4,375.8 L1592.8,374.5 L1594.2,374.3 L1595.6,375.0 L1597.0,374.6 L1598.4,375.3 L1599.8,374.5 L1601.2,375.4 L1602.6,375.7 L1604.0,377.7 L1605.4,388.1 L1606.8,398.3 L1608.2,401.0 L1609.6,400.4 L1611.0,400.8 L1612.4,400.6 L1613.8,391.2 L1615.2,378.3 L1616.6,372.3 L1618.0,372.6 L1619.4,373.1 L1620.8,372.6 L1622.2,372.5 L1623.6,373.2 L1625.0,372.5 L1626.4,381.9 L1627.8,395.6 L1629.2,400.2 L1630.6,400.1 L1632.0,401.2 L1633.4,401.7 L1634.8,401.3 L1636.2,401.2 L1637.6,400.7 L1639.0,399.6 L1640.4,384.8 L1641.8,378.4 L1643.2,377.3 L1644.6,378.3 L1646.0,377.4 L1647.4,377.4 L1648.8,377.9 L1650.2,378.5 L1651.6,378.2 L1653.0,378.1 L1654.4,378.7 L1655.8,378.4 L1657.2,379.2 L1658.6,393.7 L1660.0,400.0 L1661.4,396.2 L1662.8,375.9 L1664.2,365.6 L1665.6,365.0 L1667.0,364.8 L1668.4,365.5 L1669.8,365.6 L1671.2,365.5 L1672.6,364.9 L1674.0,364.9 L1675.4,365.4 L1676.8,364.8 L1678.2,368.9 L1679.6,388.2 L1681.0,400.8 L1682.4,401.0 L1683.8,401.2 L1685.2,401.5 L1686.6,400.7 L1688.0,400.5 L1689.4,400.8 L1690.8,400.7 L1692.2,400.4 L1693.6,399.9 L1695.0,400.9 L1696.4,401.5 L1697.8,400.5 L1699.2,398.7 L1700.6,388.8 L1702.0,378.1 L1703.4,375.1 L1704.8,375.0 L1706.2,376.1 L1707.6,375.8 L1709.0,375.4 L1710.4,376.1 L1711.8,376.7 L1713.2,386.1 L1714.6,397.7 L1716.0,400.7 L1717.4,400.6 L1718.8,400.2 L1720.2,400.3 L1721.6,399.8 L1723.0,400.3 L1724.4,400.8 L1725.8,401.4 L1727.2,400.7 L1728.6,400.7 L1730.0,400.6 L1731.4,399.9 L1732.8,396.1 L1734.2,384.3 L1735.6,376.8 L1737.0,377.5 L1738.4,377.4 L1739.8,377.7 L1741.2,377.6 L1742.6,376.7 L1744.0,377.0 L1745.4,376.7 L1746.8,376.9 L1748.2,377.2 L1749.6,376.7 L1751.0,376.8 L1752.4,377.4 L1753.8,380.0 L1755.2,391.3 L1756.6,399.8 L1758.0,401.1 L1759.4,400.7 L1760.8,388.6 L1762.2,374.7 L1763.6,370.8 L1765.0,369.7 L1766.4,369.7 L1767.8,370.4 L1769.2,369.5 L1770.6,369.8 L1772.0,370.7 L1773.4,371.1 L1774.8,371.1 L1776.2,369.9 L1777.6,369.7 L1779.0,369.4 L1780.4,370.5 L1781.8,382.2 L1783.2,396.8 L1784.6,400.9 L1786.0,401.0 L1787.4,400.5 L1788.8,400.9 L1790.2,400.4 L1791.6,401.1 L1793.0,401.0 L1794.4,400.8 L1795.8,401.5 L1797.2,401.8 L1798.6,401.1 L1800.0,400.0 L1801.4,390.3 L1802.8,377.8 L1804.2,371.5 L1805.6,371.5 L1807.0,371.5 L1808.4,372.1 L1809.8,372.5 L1811.2,372.6 L1812.6,372.8 L1814.0,372.9 L1815.4,372.4 L1816.8,372.1 L1818.2,371.6 L1819.6,371.7 L1821.0,372.4 L1822.4,372.3 L1823.8,372.4 L1825.2,376.2 L1826.6,385.9 L1828.0,397.4 L1829.4,400.6 L1830.8,401.2 L1832.2,398.8 L1833.6,389.3 L1835.0,379.1 L1836.4,377.6 L1837.8,377.3 L1839.2,376.9 L1840.6,377.8 L1842.0,378.1 L1843.4,378.0 L1844.8,377.7 L1846.2,377.3 L1847.6,377.7 L1849.0,378.0 L1850.4,377.5 L1851.8,378.2 L1853.2,378.1 L1854.6,379.5 L1856.0,387.5 L1857.4,397.8" fill="none" stroke="#e03a3a" stroke-width="0.55" stroke-opacity="0.62" stroke-linejoin="round"></path>
<path d="M1513.0,391.8 L1514.4,381.2 L1515.8,379.8 L1517.2,380.9 L1518.6,380.8 L1520.0,380.0 L1521.4,379.5 L1522.8,379.9 L1524.2,380.6 L1525.6,380.3 L1527.0,386.1 L1528.4,398.0 L1529.8,401.0 L1531.2,401.4 L1532.6,400.9 L1534.0,400.4 L1535.4,400.6 L1536.8,400.6 L1538.2,400.6 L1539.6,400.6 L1541.0,401.5 L1542.4,401.4 L1543.8,400.5 L1545.2,400.6 L1546.6,400.3 L1548.0,399.8 L1549.4,401.0 L1550.8,400.6 L1552.2,400.7 L1553.6,401.5 L1555.0,401.6 L1556.4,401.2 L1557.8,394.2 L1559.2,380.4 L1560.6,372.8 L1562.0,372.2 L1563.4,372.5 L1564.8,371.9 L1566.2,371.5 L1567.6,372.6 L1569.0,372.1 L1570.4,373.0 L1571.8,373.1 L1573.2,372.2 L1574.6,372.5 L1576.0,373.3 L1577.4,375.3 L1578.8,384.7 L1580.2,396.6 L1581.6,399.7 L1583.0,400.5 L1584.4,401.0 L1585.8,400.6 L1587.2,401.4 L1588.6,400.9 L1590.0,401.4 L1591.4,401.6 L1592.8,400.8 L1594.2,401.2 L1595.6,400.2 L1597.0,397.1 L1598.4,376.8 L1599.8,369.8 L1601.2,370.5 L1602.6,369.7 L1604.0,370.7 L1605.4,369.8 L1606.8,370.0 L1608.2,370.0 L1609.6,370.1 L1611.0,370.4 L1612.4,370.9 L1613.8,370.8 L1615.2,370.3 L1616.6,370.6 L1618.0,372.3 L1619.4,392.1 L1620.8,401.3 L1622.2,401.7 L1623.6,400.7 L1625.0,400.7 L1626.4,401.3 L1627.8,401.0 L1629.2,400.8 L1630.6,400.5 L1632.0,400.7 L1633.4,400.1 L1634.8,401.2 L1636.2,400.4 L1637.6,400.3 L1639.0,400.7 L1640.4,401.4 L1641.8,401.6 L1643.2,386.9 L1644.6,371.6 L1646.0,371.4 L1647.4,372.1 L1648.8,372.5 L1650.2,372.0 L1651.6,372.4 L1653.0,372.3 L1654.4,372.7 L1655.8,372.5 L1657.2,372.0 L1658.6,374.6 L1660.0,394.1 L1661.4,401.4 L1662.8,401.4 L1664.2,401.5 L1665.6,401.3 L1667.0,401.9 L1668.4,401.8 L1669.8,401.7 L1671.2,400.7 L1672.6,401.1 L1674.0,400.6 L1675.4,400.3 L1676.8,400.2 L1678.2,400.6 L1679.6,401.0 L1681.0,400.9 L1682.4,401.1 L1683.8,401.2 L1685.2,401.2 L1686.6,401.7 L1688.0,398.3 L1689.4,382.7 L1690.8,376.3 L1692.2,376.2 L1693.6,376.5 L1695.0,376.0 L1696.4,375.6 L1697.8,374.8 L1699.2,375.7 L1700.6,378.6 L1702.0,393.9 L1703.4,401.0 L1704.8,401.0 L1706.2,400.7 L1707.6,401.4 L1709.0,401.2 L1710.4,400.3 L1711.8,394.2 L1713.2,378.3 L1714.6,368.5 L1716.0,367.8 L1717.4,367.5 L1718.8,368.0 L1720.2,368.4 L1721.6,367.9 L1723.0,368.1 L1724.4,367.6 L1725.8,378.6 L1727.2,391.0 L1728.6,381.0 L1730.0,379.0 L1731.4,378.7 L1732.8,378.3 L1734.2,378.4 L1735.6,379.1 L1737.0,379.7 L1738.4,379.3 L1739.8,378.8 L1741.2,378.8 L1742.6,379.4 L1744.0,379.0 L1745.4,385.0 L1746.8,396.0 L1748.2,400.5 L1749.6,400.4 L1751.0,399.8 L1752.4,401.1 L1753.8,400.2 L1755.2,400.2 L1756.6,401.1 L1758.0,401.5 L1759.4,401.3 L1760.8,399.2 L1762.2,386.6 L1763.6,372.4 L1765.0,367.2 L1766.4,367.5 L1767.8,367.5 L1769.2,367.3 L1770.6,367.0 L1772.0,367.9 L1773.4,368.5 L1774.8,368.2 L1776.2,367.4 L1777.6,367.0 L1779.0,367.9 L1780.4,379.5 L1781.8,394.0 L1783.2,400.2 L1784.6,400.1 L1786.0,401.0 L1787.4,401.6 L1788.8,401.3 L1790.2,401.5 L1791.6,401.4 L1793.0,400.7 L1794.4,400.3 L1795.8,400.4 L1797.2,400.0 L1798.6,400.0 L1800.0,401.0 L1801.4,401.0 L1802.8,401.2 L1804.2,400.2 L1805.6,400.6 L1807.0,400.7 L1808.4,391.5 L1809.8,380.5 L1811.2,378.6 L1812.6,379.1 L1814.0,379.3 L1815.4,379.8 L1816.8,379.1 L1818.2,379.8 L1819.6,378.5 L1821.0,378.2 L1822.4,381.9 L1823.8,392.6 L1825.2,400.0 L1826.6,401.1 L1828.0,400.7 L1829.4,400.2 L1830.8,400.5 L1832.2,400.0 L1833.6,400.8 L1835.0,401.6 L1836.4,401.6 L1837.8,400.4 L1839.2,400.9 L1840.6,401.1 L1842.0,401.6 L1843.4,401.4 L1844.8,399.8 L1846.2,378.2 L1847.6,366.7 L1849.0,366.9 L1850.4,367.1 L1851.8,365.7 L1853.2,365.3 L1854.6,366.0 L1856.0,366.2 L1857.4,366.4" fill="none" stroke="#de4444" stroke-width="0.55" stroke-opacity="0.55" stroke-linejoin="round"></path>
<path d="M1513.0,401.0 L1514.4,400.5 L1515.8,401.4 L1517.2,401.5 L1518.6,401.7 L1520.0,400.6 L1521.4,401.3 L1522.8,401.6 L1524.2,401.7 L1525.6,400.8 L1527.0,401.3 L1528.4,400.3 L1529.8,397.8 L1531.2,383.3 L1532.6,379.2 L1534.0,379.3 L1535.4,378.4 L1536.8,377.8 L1538.2,378.7 L1539.6,379.0 L1541.0,379.6 L1542.4,379.7 L1543.8,379.4 L1545.2,379.1 L1546.6,378.8 L1548.0,380.8 L1549.4,395.0 L1550.8,401.0 L1552.2,401.2 L1553.6,401.2 L1555.0,400.3 L1556.4,400.4 L1557.8,401.4 L1559.2,400.4 L1560.6,399.8 L1562.0,400.5 L1563.4,399.9 L1564.8,401.0 L1566.2,400.2 L1567.6,401.0 L1569.0,400.3 L1570.4,400.3 L1571.8,399.8 L1573.2,400.6 L1574.6,400.5 L1576.0,399.9 L1577.4,401.0 L1578.8,401.4 L1580.2,401.0 L1581.6,401.5 L1583.0,401.9 L1584.4,402.1 L1585.8,398.8 L1587.2,388.9 L1588.6,380.3 L1590.0,378.4 L1591.4,379.2 L1592.8,379.5 L1594.2,378.9 L1595.6,379.3 L1597.0,379.7 L1598.4,379.8 L1599.8,378.9 L1601.2,378.0 L1602.6,378.3 L1604.0,379.2 L1605.4,379.3 L1606.8,378.6 L1608.2,378.1 L1609.6,379.9 L1611.0,387.8 L1612.4,397.4 L1613.8,386.6 L1615.2,381.3 L1616.6,381.5 L1618.0,381.1 L1619.4,381.7 L1620.8,381.4 L1622.2,381.5 L1623.6,381.4 L1625.0,382.2 L1626.4,381.9 L1627.8,381.6 L1629.2,382.5 L1630.6,390.4 L1632.0,400.3 L1633.4,401.3 L1634.8,400.4 L1636.2,400.3 L1637.6,400.6 L1639.0,400.1 L1640.4,400.1 L1641.8,400.5 L1643.2,400.8 L1644.6,400.2 L1646.0,400.4 L1647.4,400.6 L1648.8,400.9 L1650.2,401.4 L1651.6,401.6 L1653.0,401.0 L1654.4,400.9 L1655.8,400.4 L1657.2,400.7 L1658.6,400.9 L1660.0,400.8 L1661.4,401.2 L1662.8,399.8 L1664.2,392.6 L1665.6,383.0 L1667.0,377.3 L1668.4,376.7 L1669.8,376.3 L1671.2,376.4 L1672.6,376.2 L1674.0,376.2 L1675.4,377.0 L1676.8,377.2 L1678.2,377.3 L1679.6,378.0 L1681.0,377.5 L1682.4,377.3 L1683.8,376.8 L1685.2,377.3 L1686.6,381.5 L1688.0,391.6 L1689.4,399.6 L1690.8,401.0 L1692.2,400.2 L1693.6,400.2 L1695.0,400.3 L1696.4,401.0 L1697.8,401.4 L1699.2,401.6 L1700.6,400.5 L1702.0,400.8 L1703.4,400.3 L1704.8,393.4 L1706.2,382.4 L1707.6,378.0 L1709.0,378.5 L1710.4,377.5 L1711.8,378.3 L1713.2,377.4 L1714.6,377.9 L1716.0,378.7 L1717.4,383.2 L1718.8,393.0 L1720.2,400.6 L1721.6,401.4 L1723.0,401.8 L1724.4,402.0 L1725.8,401.3 L1727.2,401.3 L1728.6,400.7 L1730.0,401.4 L1731.4,401.4 L1732.8,401.0 L1734.2,401.2 L1735.6,400.7 L1737.0,401.1 L1738.4,400.6 L1739.8,400.4 L1741.2,400.7 L1742.6,400.4 L1744.0,400.9 L1745.4,400.2 L1746.8,400.1 L1748.2,400.8 L1749.6,400.2 L1751.0,400.3 L1752.4,400.0 L1753.8,400.1 L1755.2,399.8 L1756.6,400.2 L1758.0,393.3 L1759.4,381.6 L1760.8,380.1 L1762.2,380.5 L1763.6,380.4 L1765.0,380.5 L1766.4,381.0 L1767.8,382.8 L1769.2,394.0 L1770.6,401.4 L1772.0,401.2 L1773.4,400.5 L1774.8,400.9 L1776.2,400.9 L1777.6,400.1 L1779.0,400.3 L1780.4,400.5 L1781.8,401.1 L1783.2,400.6 L1784.6,400.9 L1786.0,400.5 L1787.4,399.9 L1788.8,399.8 L1790.2,400.8 L1791.6,400.1 L1793.0,400.2 L1794.4,401.0 L1795.8,398.1 L1797.2,383.5 L1798.6,380.9 L1800.0,380.8 L1801.4,381.5 L1802.8,380.4 L1804.2,381.2 L1805.6,380.4 L1807.0,380.5 L1808.4,380.1 L1809.8,379.9 L1811.2,379.9 L1812.6,380.5 L1814.0,380.5 L1815.4,381.1 L1816.8,386.6 L1818.2,401.0 L1819.6,401.5 L1821.0,400.5 L1822.4,400.3 L1823.8,401.3 L1825.2,401.3 L1826.6,401.1 L1828.0,400.9 L1829.4,400.9 L1830.8,400.3 L1832.2,401.0 L1833.6,400.7 L1835.0,400.5 L1836.4,401.4 L1837.8,401.7 L1839.2,401.8 L1840.6,401.1 L1842.0,400.4 L1843.4,400.0 L1844.8,399.9 L1846.2,400.2 L1847.6,400.3 L1849.0,400.3 L1850.4,400.9 L1851.8,400.9 L1853.2,401.4 L1854.6,401.4 L1856.0,401.3 L1857.4,400.3" fill="none" stroke="#e05050" stroke-width="0.55" stroke-opacity="0.5" stroke-linejoin="round"></path>
<path d="M1513.0,396.6 L1514.4,376.3 L1515.8,370.7 L1517.2,370.7 L1518.6,370.8 L1520.0,370.9 L1521.4,370.0 L1522.8,370.6 L1524.2,370.2 L1525.6,371.0 L1527.0,370.3 L1528.4,371.0 L1529.8,370.3 L1531.2,371.1 L1532.6,371.2 L1534.0,376.2 L1535.4,395.7 L1536.8,400.7 L1538.2,400.8 L1539.6,401.5 L1541.0,401.7 L1542.4,401.4 L1543.8,400.7 L1545.2,400.5 L1546.6,400.7 L1548.0,400.3 L1549.4,399.8 L1550.8,399.6 L1552.2,399.4 L1553.6,399.4 L1555.0,399.3 L1556.4,399.7 L1557.8,400.0 L1559.2,400.2 L1560.6,400.7 L1562.0,400.2 L1563.4,400.7 L1564.8,400.1 L1566.2,400.5 L1567.6,401.4 L1569.0,400.6 L1570.4,400.7 L1571.8,401.5 L1573.2,400.3 L1574.6,387.8 L1576.0,370.9 L1577.4,366.3 L1578.8,367.0 L1580.2,367.3 L1581.6,366.9 L1583.0,366.5 L1584.4,366.5 L1585.8,367.0 L1587.2,367.4 L1588.6,366.3 L1590.0,365.7 L1591.4,365.5 L1592.8,372.2 L1594.2,390.0 L1595.6,401.3 L1597.0,401.0 L1598.4,400.3 L1599.8,400.2 L1601.2,401.2 L1602.6,400.3 L1604.0,400.3 L1605.4,400.7 L1606.8,400.3 L1608.2,400.7 L1609.6,400.7 L1611.0,401.5 L1612.4,401.8 L1613.8,400.6 L1615.2,400.8 L1616.6,400.4 L1618.0,400.8 L1619.4,401.0 L1620.8,401.5 L1622.2,400.5 L1623.6,401.1 L1625.0,400.5 L1626.4,401.2 L1627.8,401.3 L1629.2,401.7 L1630.6,396.2 L1632.0,377.3 L1633.4,374.2 L1634.8,374.2 L1636.2,374.9 L1637.6,374.1 L1639.0,375.0 L1640.4,375.3 L1641.8,374.9 L1643.2,374.6 L1644.6,375.0 L1646.0,374.7 L1647.4,375.3 L1648.8,375.7 L1650.2,377.9 L1651.6,395.5 L1653.0,400.3 L1654.4,400.6 L1655.8,400.0 L1657.2,400.0 L1658.6,399.6 L1660.0,399.9 L1661.4,400.5 L1662.8,400.4 L1664.2,400.3 L1665.6,400.9 L1667.0,401.4 L1668.4,401.4 L1669.8,401.0 L1671.2,401.6 L1672.6,401.4 L1674.0,401.7 L1675.4,400.5 L1676.8,400.8 L1678.2,400.7 L1679.6,401.3 L1681.0,401.1 L1682.4,400.2 L1683.8,400.0 L1685.2,399.7 L1686.6,400.8 L1688.0,400.2 L1689.4,400.0 L1690.8,400.6 L1692.2,400.9 L1693.6,400.2 L1695.0,399.9 L1696.4,391.4 L1697.8,378.8 L1699.2,371.4 L1700.6,371.3 L1702.0,371.3 L1703.4,370.9 L1704.8,370.7 L1706.2,371.0 L1707.6,370.4 L1709.0,374.3 L1710.4,385.7 L1711.8,397.0 L1713.2,401.8 L1714.6,401.3 L1716.0,401.1 L1717.4,401.3 L1718.8,401.1 L1720.2,401.0 L1721.6,400.8 L1723.0,400.7 L1724.4,401.0 L1725.8,401.1 L1727.2,399.4 L1728.6,384.7 L1730.0,373.7 L1731.4,374.5 L1732.8,374.8 L1734.2,374.5 L1735.6,373.5 L1737.0,374.3 L1738.4,374.9 L1739.8,374.1 L1741.2,380.3 L1742.6,398.0 L1744.0,400.5 L1745.4,400.5 L1746.8,400.4 L1748.2,401.2 L1749.6,400.8 L1751.0,401.5 L1752.4,401.6 L1753.8,401.1 L1755.2,400.1 L1756.6,399.8 L1758.0,400.8 L1759.4,400.1 L1760.8,399.8 L1762.2,401.0 L1763.6,401.6 L1765.0,401.7 L1766.4,400.4 L1767.8,401.0 L1769.2,400.8 L1770.6,400.6 L1772.0,400.8 L1773.4,401.1 L1774.8,400.8 L1776.2,400.3 L1777.6,401.0 L1779.0,400.8 L1780.4,391.4 L1781.8,380.5 L1783.2,378.4 L1784.6,379.5 L1786.0,379.0 L1787.4,378.5 L1788.8,378.3 L1790.2,379.5 L1791.6,380.2 L1793.0,379.8 L1794.4,382.3 L1795.8,392.5 L1797.2,400.6 L1798.6,400.0 L1800.0,399.9 L1801.4,400.5 L1802.8,401.2 L1804.2,401.6 L1805.6,401.4 L1807.0,399.3 L1808.4,390.3 L1809.8,381.9 L1811.2,379.4 L1812.6,380.5 L1814.0,381.0 L1815.4,380.4 L1816.8,380.8 L1818.2,381.1 L1819.6,380.5 L1821.0,382.9 L1822.4,391.2 L1823.8,399.4 L1825.2,401.4 L1826.6,401.9 L1828.0,400.9 L1829.4,400.5 L1830.8,401.3 L1832.2,400.9 L1833.6,401.6 L1835.0,401.3 L1836.4,400.5 L1837.8,399.9 L1839.2,398.6 L1840.6,388.0 L1842.0,376.6 L1843.4,371.5 L1844.8,372.4 L1846.2,373.2 L1847.6,372.8 L1849.0,371.9 L1850.4,371.9 L1851.8,371.9 L1853.2,371.7 L1854.6,371.8 L1856.0,371.7 L1857.4,372.3" fill="none" stroke="#63b05b" stroke-width="0.55" stroke-opacity="0.55" stroke-linejoin="round"></path>
<path d="M1513.0,402.2 L1514.4,401.5 L1515.8,400.8 L1517.2,401.5 L1518.6,400.5 L1520.0,400.5 L1521.4,387.8 L1522.8,371.8 L1524.2,371.0 L1525.6,371.2 L1527.0,371.5 L1528.4,370.8 L1529.8,371.7 L1531.2,372.0 L1532.6,387.9 L1534.0,399.9 L1535.4,399.9 L1536.8,399.8 L1538.2,400.9 L1539.6,400.6 L1541.0,400.7 L1542.4,399.9 L1543.8,399.6 L1545.2,400.4 L1546.6,400.1 L1548.0,400.7 L1549.4,400.9 L1550.8,400.5 L1552.2,400.0 L1553.6,400.0 L1555.0,400.9 L1556.4,401.5 L1557.8,400.5 L1559.2,400.6 L1560.6,400.6 L1562.0,400.4 L1563.4,399.9 L1564.8,400.0 L1566.2,400.2 L1567.6,388.4 L1569.0,370.0 L1570.4,369.1 L1571.8,369.3 L1573.2,368.8 L1574.6,369.5 L1576.0,369.0 L1577.4,368.5 L1578.8,368.7 L1580.2,369.4 L1581.6,378.4 L1583.0,398.7 L1584.4,400.4 L1585.8,400.2 L1587.2,401.0 L1588.6,401.1 L1590.0,400.5 L1591.4,401.2 L1592.8,400.6 L1594.2,400.6 L1595.6,401.2 L1597.0,401.2 L1598.4,400.4 L1599.8,401.2 L1601.2,401.0 L1602.6,400.1 L1604.0,400.8 L1605.4,400.3 L1606.8,400.7 L1608.2,400.1 L1609.6,399.7 L1611.0,399.9 L1612.4,400.8 L1613.8,400.1 L1615.2,400.7 L1616.6,400.3 L1618.0,400.3 L1619.4,400.4 L1620.8,400.7 L1622.2,400.4 L1623.6,399.8 L1625.0,399.7 L1626.4,399.7 L1627.8,400.7 L1629.2,401.1 L1630.6,400.6 L1632.0,400.8 L1633.4,400.1 L1634.8,400.5 L1636.2,399.9 L1637.6,401.1 L1639.0,400.3 L1640.4,400.9 L1641.8,400.4 L1643.2,400.5 L1644.6,400.4 L1646.0,400.7 L1647.4,400.3 L1648.8,400.0 L1650.2,396.9 L1651.6,386.7 L1653.0,379.8 L1654.4,379.5 L1655.8,379.7 L1657.2,379.5 L1658.6,380.2 L1660.0,380.2 L1661.4,379.6 L1662.8,387.0 L1664.2,396.5 L1665.6,400.8 L1667.0,400.8 L1668.4,401.2 L1669.8,400.6 L1671.2,401.3 L1672.6,401.3 L1674.0,401.7 L1675.4,401.3 L1676.8,401.8 L1678.2,401.2 L1679.6,401.0 L1681.0,401.5 L1682.4,401.8 L1683.8,401.5 L1685.2,400.5 L1686.6,400.6 L1688.0,400.5 L1689.4,401.1 L1690.8,400.5 L1692.2,401.3 L1693.6,400.3 L1695.0,400.4 L1696.4,400.7 L1697.8,400.2 L1699.2,401.0 L1700.6,401.1 L1702.0,400.5 L1703.4,400.0 L1704.8,400.7 L1706.2,401.3 L1707.6,400.7 L1709.0,400.8 L1710.4,400.2 L1711.8,399.7 L1713.2,399.5 L1714.6,399.9 L1716.0,399.6 L1717.4,399.8 L1718.8,400.7 L1720.2,400.0 L1721.6,401.1 L1723.0,400.9 L1724.4,401.3 L1725.8,400.8 L1727.2,400.7 L1728.6,400.6 L1730.0,400.2 L1731.4,400.7 L1732.8,396.9 L1734.2,374.2 L1735.6,367.5 L1737.0,368.1 L1738.4,367.9 L1739.8,367.8 L1741.2,367.7 L1742.6,367.6 L1744.0,367.9 L1745.4,367.9 L1746.8,367.1 L1748.2,367.2 L1749.6,366.9 L1751.0,367.9 L1752.4,367.6 L1753.8,371.2 L1755.2,393.2 L1756.6,400.9 L1758.0,400.5 L1759.4,400.4 L1760.8,400.8 L1762.2,401.3 L1763.6,400.4 L1765.0,400.4 L1766.4,401.4 L1767.8,400.4 L1769.2,397.0 L1770.6,381.9 L1772.0,377.8 L1773.4,376.8 L1774.8,377.3 L1776.2,377.6 L1777.6,377.1 L1779.0,376.9 L1780.4,376.2 L1781.8,376.7 L1783.2,383.9 L1784.6,398.9 L1786.0,401.4 L1787.4,401.5 L1788.8,400.7 L1790.2,401.2 L1791.6,400.4 L1793.0,400.8 L1794.4,401.3 L1795.8,401.4 L1797.2,401.5 L1798.6,401.3 L1800.0,400.7 L1801.4,400.0 L1802.8,400.5 L1804.2,398.0 L1805.6,387.2 L1807.0,377.8 L1808.4,376.1 L1809.8,375.6 L1811.2,376.3 L1812.6,375.4 L1814.0,376.2 L1815.4,376.3 L1816.8,376.0 L1818.2,376.3 L1819.6,376.7 L1821.0,380.6 L1822.4,391.9 L1823.8,400.0 L1825.2,399.9 L1826.6,400.0 L1828.0,400.0 L1829.4,400.0 L1830.8,399.6 L1832.2,399.6 L1833.6,400.6 L1835.0,400.4 L1836.4,401.0 L1837.8,401.7 L1839.2,401.5 L1840.6,400.6 L1842.0,401.1 L1843.4,400.2 L1844.8,399.9 L1846.2,399.8 L1847.6,400.3 L1849.0,401.0 L1850.4,400.2 L1851.8,401.3 L1853.2,400.6 L1854.6,400.1 L1856.0,400.4 L1857.4,400.1" fill="none" stroke="#5a9fd0" stroke-width="0.55" stroke-opacity="0.5" stroke-linejoin="round"></path>
<path d="M1513.0,401.9 L1514.4,401.1 L1515.8,400.9 L1517.2,400.5 L1518.6,399.9 L1520.0,400.3 L1521.4,395.6 L1522.8,385.5 L1524.2,381.5 L1525.6,380.8 L1527.0,380.6 L1528.4,381.5 L1529.8,382.3 L1531.2,381.3 L1532.6,382.0 L1534.0,381.6 L1535.4,382.3 L1536.8,382.0 L1538.2,381.6 L1539.6,381.0 L1541.0,383.5 L1542.4,393.2 L1543.8,400.1 L1545.2,400.5 L1546.6,401.3 L1548.0,401.3 L1549.4,401.5 L1550.8,400.7 L1552.2,400.5 L1553.6,401.3 L1555.0,401.1 L1556.4,400.5 L1557.8,400.1 L1559.2,400.1 L1560.6,400.3 L1562.0,400.6 L1563.4,400.0 L1564.8,400.4 L1566.2,401.0 L1567.6,401.2 L1569.0,401.2 L1570.4,401.2 L1571.8,401.3 L1573.2,401.3 L1574.6,400.5 L1576.0,401.2 L1577.4,401.6 L1578.8,401.6 L1580.2,401.7 L1581.6,400.5 L1583.0,400.1 L1584.4,399.9 L1585.8,401.2 L1587.2,400.7 L1588.6,400.4 L1590.0,401.1 L1591.4,401.3 L1592.8,401.0 L1594.2,401.1 L1595.6,400.3 L1597.0,389.7 L1598.4,378.1 L1599.8,376.4 L1601.2,376.1 L1602.6,376.1 L1604.0,377.1 L1605.4,376.9 L1606.8,377.4 L1608.2,377.1 L1609.6,379.4 L1611.0,390.3 L1612.4,400.2 L1613.8,400.7 L1615.2,400.2 L1616.6,394.8 L1618.0,388.2 L1619.4,385.7 L1620.8,384.7 L1622.2,384.9 L1623.6,385.4 L1625.0,384.8 L1626.4,385.7 L1627.8,385.1 L1629.2,385.3 L1630.6,384.5 L1632.0,385.5 L1633.4,384.7 L1634.8,384.7 L1636.2,384.6 L1637.6,388.8 L1639.0,395.6 L1640.4,400.2 L1641.8,401.1 L1643.2,400.3 L1644.6,400.5 L1646.0,400.2 L1647.4,400.1 L1648.8,400.9 L1650.2,400.9 L1651.6,401.5 L1653.0,401.8 L1654.4,402.0 L1655.8,400.6 L1657.2,400.8 L1658.6,401.0 L1660.0,400.5 L1661.4,401.1 L1662.8,401.6 L1664.2,401.9 L1665.6,401.9 L1667.0,401.7 L1668.4,401.7 L1669.8,401.3 L1671.2,401.3 L1672.6,400.4 L1674.0,400.6 L1675.4,400.1 L1676.8,400.3 L1678.2,400.5 L1679.6,399.9 L1681.0,401.0 L1682.4,398.3 L1683.8,384.7 L1685.2,377.5 L1686.6,378.1 L1688.0,377.9 L1689.4,377.9 L1690.8,377.3 L1692.2,377.5 L1693.6,377.0 L1695.0,377.4 L1696.4,388.9 L1697.8,400.8 L1699.2,400.8 L1700.6,401.3 L1702.0,401.1 L1703.4,401.4 L1704.8,400.9 L1706.2,400.5 L1707.6,400.7 L1709.0,400.3 L1710.4,400.2 L1711.8,401.2 L1713.2,400.9 L1714.6,400.8 L1716.0,400.7 L1717.4,400.8 L1718.8,400.2 L1720.2,400.1 L1721.6,400.1 L1723.0,401.1 L1724.4,401.1 L1725.8,401.4 L1727.2,400.4 L1728.6,400.5 L1730.0,401.3 L1731.4,400.7 L1732.8,401.5 L1734.2,401.3 L1735.6,401.6 L1737.0,401.8 L1738.4,401.0 L1739.8,400.2 L1741.2,400.9 L1742.6,401.2 L1744.0,400.2 L1745.4,399.8 L1746.8,399.8 L1748.2,399.8 L1749.6,400.8 L1751.0,401.5 L1752.4,401.7 L1753.8,401.1 L1755.2,401.7 L1756.6,401.0 L1758.0,401.2 L1759.4,393.8 L1760.8,385.8 L1762.2,383.7 L1763.6,384.2 L1765.0,383.9 L1766.4,383.5 L1767.8,383.7 L1769.2,384.6 L1770.6,391.1 L1772.0,398.4 L1773.4,401.2 L1774.8,400.8 L1776.2,401.4 L1777.6,401.0 L1779.0,401.7 L1780.4,400.7 L1781.8,400.9 L1783.2,400.7 L1784.6,400.5 L1786.0,400.7 L1787.4,400.7 L1788.8,394.5 L1790.2,388.2 L1791.6,386.5 L1793.0,386.5 L1794.4,386.9 L1795.8,386.0 L1797.2,385.7 L1798.6,385.4 L1800.0,386.3 L1801.4,386.0 L1802.8,386.0 L1804.2,391.9 L1805.6,398.2 L1807.0,400.6 L1808.4,400.2 L1809.8,400.8 L1811.2,400.5 L1812.6,401.1 L1814.0,401.6 L1815.4,401.2 L1816.8,400.5 L1818.2,401.1 L1819.6,400.5 L1821.0,401.2 L1822.4,400.2 L1823.8,400.8 L1825.2,400.6 L1826.6,401.2 L1828.0,400.8 L1829.4,401.5 L1830.8,400.5 L1832.2,401.0 L1833.6,400.7 L1835.0,400.6 L1836.4,400.1 L1837.8,399.9 L1839.2,399.8 L1840.6,399.9 L1842.0,400.9 L1843.4,401.5 L1844.8,401.4 L1846.2,401.5 L1847.6,401.9 L1849.0,402.0 L1850.4,401.9 L1851.8,401.5 L1853.2,401.4 L1854.6,400.5 L1856.0,400.0 L1857.4,400.1" fill="none" stroke="#f0a040" stroke-width="0.55" stroke-opacity="0.5" stroke-linejoin="round"></path>
<path d="M1513.0,384.7 L1514.4,384.6 L1515.8,384.6 L1517.2,384.4 L1518.6,383.4 L1520.0,383.0 L1521.4,382.6 L1522.8,383.1 L1524.2,383.6 L1525.6,386.8 L1527.0,393.9 L1528.4,400.6 L1529.8,401.6 L1531.2,401.8 L1532.6,401.6 L1534.0,400.9 L1535.4,400.6 L1536.8,401.1 L1538.2,401.5 L1539.6,401.1 L1541.0,400.2 L1542.4,399.7 L1543.8,401.0 L1545.2,401.5 L1546.6,401.9 L1548.0,401.3 L1549.4,401.1 L1550.8,400.6 L1552.2,401.0 L1553.6,400.3 L1555.0,400.1 L1556.4,400.8 L1557.8,400.1 L1559.2,400.3 L1560.6,401.3 L1562.0,400.7 L1563.4,400.5 L1564.8,400.3 L1566.2,400.4 L1567.6,395.7 L1569.0,388.3 L1570.4,387.7 L1571.8,388.7 L1573.2,388.5 L1574.6,388.4 L1576.0,388.6 L1577.4,388.1 L1578.8,388.5 L1580.2,387.6 L1581.6,387.7 L1583.0,388.4 L1584.4,388.5 L1585.8,388.8 L1587.2,388.5 L1588.6,388.5 L1590.0,391.6 L1591.4,399.5 L1592.8,401.4 L1594.2,400.3 L1595.6,401.1 L1597.0,400.2 L1598.4,400.9 L1599.8,401.1 L1601.2,401.6 L1602.6,401.1 L1604.0,400.3 L1605.4,400.3 L1606.8,401.4 L1608.2,401.1 L1609.6,401.5 L1611.0,401.8 L1612.4,401.8 L1613.8,399.7 L1615.2,394.5 L1616.6,388.7 L1618.0,388.0 L1619.4,388.5 L1620.8,389.0 L1622.2,388.0 L1623.6,388.0 L1625.0,387.5 L1626.4,388.2 L1627.8,387.9 L1629.2,387.4 L1630.6,387.7 L1632.0,387.1 L1633.4,388.1 L1634.8,393.9 L1636.2,398.8 L1637.6,400.3 L1639.0,400.2 L1640.4,399.9 L1641.8,399.7 L1643.2,400.3 L1644.6,400.4 L1646.0,399.9 L1647.4,393.8 L1648.8,385.2 L1650.2,383.2 L1651.6,383.2 L1653.0,383.6 L1654.4,384.3 L1655.8,383.7 L1657.2,383.6 L1658.6,383.6 L1660.0,383.8 L1661.4,383.3 L1662.8,383.6 L1664.2,383.4 L1665.6,384.7 L1667.0,394.6 L1668.4,401.7 L1669.8,402.0 L1671.2,401.0 L1672.6,401.4 L1674.0,401.8 L1675.4,400.7 L1676.8,400.5 L1678.2,401.4 L1679.6,401.8 L1681.0,401.0 L1682.4,400.1 L1683.8,400.0 L1685.2,400.1 L1686.6,395.7 L1688.0,387.0 L1689.4,384.2 L1690.8,383.7 L1692.2,384.1 L1693.6,385.2 L1695.0,384.4 L1696.4,384.5 L1697.8,384.1 L1699.2,384.8 L1700.6,385.6 L1702.0,384.5 L1703.4,385.2 L1704.8,384.5 L1706.2,392.2 L1707.6,400.1 L1709.0,400.2 L1710.4,400.0 L1711.8,401.2 L1713.2,401.7 L1714.6,401.1 L1716.0,401.5 L1717.4,401.0 L1718.8,400.3 L1720.2,400.3 L1721.6,401.0 L1723.0,400.5 L1724.4,400.0 L1725.8,400.5 L1727.2,401.0 L1728.6,400.8 L1730.0,401.1 L1731.4,401.0 L1732.8,401.0 L1734.2,401.6 L1735.6,400.8 L1737.0,401.0 L1738.4,400.7 L1739.8,400.8 L1741.2,400.9 L1742.6,400.4 L1744.0,401.1 L1745.4,400.9 L1746.8,401.5 L1748.2,400.9 L1749.6,399.6 L1751.0,389.5 L1752.4,387.1 L1753.8,387.1 L1755.2,386.8 L1756.6,387.6 L1758.0,386.9 L1759.4,386.1 L1760.8,386.1 L1762.2,386.2 L1763.6,386.5 L1765.0,396.1 L1766.4,400.2 L1767.8,401.1 L1769.2,401.0 L1770.6,400.6 L1772.0,400.1 L1773.4,400.4 L1774.8,401.0 L1776.2,400.4 L1777.6,400.3 L1779.0,400.2 L1780.4,401.3 L1781.8,400.3 L1783.2,399.9 L1784.6,401.1 L1786.0,400.4 L1787.4,401.3 L1788.8,400.9 L1790.2,401.2 L1791.6,400.4 L1793.0,400.7 L1794.4,400.0 L1795.8,400.2 L1797.2,400.2 L1798.6,400.9 L1800.0,401.6 L1801.4,402.0 L1802.8,400.8 L1804.2,400.2 L1805.6,400.5 L1807.0,401.4 L1808.4,396.7 L1809.8,387.7 L1811.2,384.0 L1812.6,384.0 L1814.0,383.5 L1815.4,383.1 L1816.8,383.4 L1818.2,383.4 L1819.6,382.9 L1821.0,383.8 L1822.4,384.5 L1823.8,384.7 L1825.2,384.4 L1826.6,384.9 L1828.0,387.2 L1829.4,395.5 L1830.8,401.1 L1832.2,401.6 L1833.6,401.1 L1835.0,400.7 L1836.4,398.3 L1837.8,391.3 L1839.2,386.4 L1840.6,385.9 L1842.0,385.6 L1843.4,385.6 L1844.8,385.7 L1846.2,385.0 L1847.6,386.0 L1849.0,391.9 L1850.4,398.9 L1851.8,401.1 L1853.2,401.1 L1854.6,401.4 L1856.0,401.2 L1857.4,401.7" fill="none" stroke="#d63a5a" stroke-width="0.55" stroke-opacity="0.45" stroke-linejoin="round"></path>
<path d="M1513.0,400.9 L1514.4,400.9 L1515.8,401.3 L1517.2,400.4 L1518.6,401.4 L1520.0,401.4 L1521.4,400.9 L1522.8,400.9 L1524.2,394.4 L1525.6,388.7 L1527.0,389.0 L1528.4,389.3 L1529.8,388.7 L1531.2,388.9 L1532.6,389.0 L1534.0,389.2 L1535.4,388.9 L1536.8,388.7 L1538.2,389.8 L1539.6,390.2 L1541.0,390.7 L1542.4,393.6 L1543.8,400.5 L1545.2,401.4 L1546.6,400.9 L1548.0,397.3 L1549.4,393.2 L1550.8,393.0 L1552.2,393.2 L1553.6,392.2 L1555.0,391.5 L1556.4,392.6 L1557.8,392.8 L1559.2,392.4 L1560.6,392.4 L1562.0,392.9 L1563.4,392.0 L1564.8,392.0 L1566.2,392.4 L1567.6,395.2 L1569.0,399.7 L1570.4,401.6 L1571.8,400.5 L1573.2,399.9 L1574.6,400.6 L1576.0,400.6 L1577.4,401.5 L1578.8,400.5 L1580.2,401.2 L1581.6,400.7 L1583.0,400.2 L1584.4,400.5 L1585.8,399.9 L1587.2,400.8 L1588.6,401.5 L1590.0,401.9 L1591.4,402.1 L1592.8,401.9 L1594.2,400.1 L1595.6,394.7 L1597.0,393.4 L1598.4,393.5 L1599.8,392.2 L1601.2,391.6 L1602.6,391.1 L1604.0,391.0 L1605.4,394.4 L1606.8,400.2 L1608.2,400.2 L1609.6,400.3 L1611.0,400.9 L1612.4,400.1 L1613.8,400.1 L1615.2,400.1 L1616.6,397.0 L1618.0,393.1 L1619.4,392.6 L1620.8,392.7 L1622.2,393.0 L1623.6,392.3 L1625.0,392.8 L1626.4,392.3 L1627.8,392.7 L1629.2,393.6 L1630.6,393.7 L1632.0,392.7 L1633.4,393.4 L1634.8,394.0 L1636.2,393.5 L1637.6,393.7 L1639.0,397.2 L1640.4,401.2 L1641.8,401.9 L1643.2,401.7 L1644.6,401.9 L1646.0,398.1 L1647.4,395.0 L1648.8,394.9 L1650.2,395.0 L1651.6,394.0 L1653.0,393.7 L1654.4,394.5 L1655.8,393.9 L1657.2,396.0 L1658.6,400.1 L1660.0,401.1 L1661.4,401.6 L1662.8,401.6 L1664.2,400.8 L1665.6,400.6 L1667.0,400.2 L1668.4,400.9 L1669.8,401.6 L1671.2,400.9 L1672.6,401.0 L1674.0,400.6 L1675.4,400.2 L1676.8,400.6 L1678.2,400.2 L1679.6,399.8 L1681.0,399.4 L1682.4,396.4 L1683.8,392.6 L1685.2,391.8 L1686.6,391.6 L1688.0,391.7 L1689.4,392.5 L1690.8,392.3 L1692.2,392.4 L1693.6,391.8 L1695.0,392.2 L1696.4,392.6 L1697.8,392.8 L1699.2,393.1 L1700.6,392.3 L1702.0,394.0 L1703.4,397.9 L1704.8,400.3 L1706.2,401.4 L1707.6,401.3 L1709.0,400.9 L1710.4,400.9 L1711.8,400.9 L1713.2,401.2 L1714.6,401.1 L1716.0,401.0 L1717.4,401.5 L1718.8,401.1 L1720.2,400.8 L1721.6,400.1 L1723.0,400.8 L1724.4,400.4 L1725.8,399.9 L1727.2,401.0 L1728.6,400.3 L1730.0,401.3 L1731.4,399.0 L1732.8,391.9 L1734.2,391.2 L1735.6,390.9 L1737.0,390.1 L1738.4,390.0 L1739.8,389.6 L1741.2,390.3 L1742.6,390.2 L1744.0,391.4 L1745.4,398.0 L1746.8,401.4 L1748.2,401.4 L1749.6,400.3 L1751.0,400.1 L1752.4,400.1 L1753.8,399.1 L1755.2,394.2 L1756.6,391.8 L1758.0,391.4 L1759.4,391.0 L1760.8,392.0 L1762.2,391.7 L1763.6,391.7 L1765.0,391.2 L1766.4,392.0 L1767.8,391.3 L1769.2,392.7 L1770.6,396.6 L1772.0,401.0 L1773.4,401.8 L1774.8,401.6 L1776.2,401.0 L1777.6,401.0 L1779.0,401.0 L1780.4,401.2 L1781.8,397.1 L1783.2,391.3 L1784.6,390.9 L1786.0,389.9 L1787.4,390.0 L1788.8,389.2 L1790.2,390.0 L1791.6,390.4 L1793.0,389.8 L1794.4,389.4 L1795.8,389.3 L1797.2,395.6 L1798.6,401.0 L1800.0,401.4 L1801.4,400.8 L1802.8,400.9 L1804.2,401.4 L1805.6,401.8 L1807.0,401.3 L1808.4,400.4 L1809.8,399.8 L1811.2,400.0 L1812.6,399.9 L1814.0,401.0 L1815.4,400.2 L1816.8,399.9 L1818.2,400.2 L1819.6,394.6 L1821.0,389.8 L1822.4,389.1 L1823.8,390.0 L1825.2,389.3 L1826.6,389.2 L1828.0,389.5 L1829.4,390.1 L1830.8,390.0 L1832.2,390.2 L1833.6,390.1 L1835.0,389.4 L1836.4,389.0 L1837.8,388.8 L1839.2,395.7 L1840.6,400.8 L1842.0,400.3 L1843.4,401.0 L1844.8,401.2 L1846.2,400.5 L1847.6,396.7 L1849.0,392.3 L1850.4,393.1 L1851.8,392.5 L1853.2,392.7 L1854.6,392.8 L1856.0,392.4 L1857.4,392.3" fill="none" stroke="#e46a5a" stroke-width="0.55" stroke-opacity="0.45" stroke-linejoin="round"></path>
<path d="M1513,402.8 L1858,402.8" stroke="#e5483f" stroke-width="1.5" stroke-opacity="0.7"></path>
<path d="M1513,401.4 L1560,401.9 L1610,401.1 L1680,402 L1740,400.9 L1800,401.6 L1858,400.8" stroke="#ee6a5a" stroke-width="0.9" stroke-opacity="0.6" fill="none"></path>
<rect x="1513.4" y="417.6" width="6" height="3.8" fill="#f58220"></rect>
<rect x="1521.0" y="418.6" width="5.6" height="1.7" fill="#6a6a6a"></rect>
<rect x="1527.4" y="418.6" width="7.4" height="1.7" fill="#8a8a8a"></rect>
<rect x="1513.4" y="423.5" width="6" height="3.8" fill="#e8201c"></rect>
<rect x="1521.0" y="424.5" width="5.6" height="1.7" fill="#6a6a6a"></rect>
<rect x="1527.4" y="424.5" width="7.4" height="1.7" fill="#8a8a8a"></rect>
<rect x="1513.4" y="429.4" width="6" height="3.8" fill="#e8201c"></rect>
<rect x="1521.0" y="430.4" width="5.6" height="1.7" fill="#6a6a6a"></rect>
<rect x="1527.4" y="430.4" width="9" height="1.7" fill="#8a8a8a"></rect>
<rect x="1600" y="417.6" width="6" height="3.8" fill="#c8102e"></rect>
<rect x="1607.6" y="418.6" width="5.6" height="1.7" fill="#6a6a6a"></rect>
<rect x="1614" y="418.6" width="7.4" height="1.7" fill="#8a8a8a"></rect>
<rect x="1600" y="423.5" width="6" height="3.8" fill="#e8201c"></rect>
<rect x="1607.6" y="424.5" width="5.6" height="1.7" fill="#6a6a6a"></rect>
<rect x="1614" y="424.5" width="7.4" height="1.7" fill="#8a8a8a"></rect>
<rect x="1600" y="429.4" width="6" height="3.8" fill="#e8201c"></rect>
<rect x="1607.6" y="430.4" width="5.6" height="1.7" fill="#6a6a6a"></rect>
<rect x="1614" y="430.4" width="9" height="1.7" fill="#8a8a8a"></rect>
<rect x="1686.6" y="417.6" width="6" height="3.8" fill="#3fa535"></rect>
<rect x="1694.1999999999998" y="418.6" width="5.6" height="1.7" fill="#6a6a6a"></rect>
<rect x="1700.6" y="418.6" width="7.4" height="1.7" fill="#8a8a8a"></rect>
<rect x="1686.6" y="423.5" width="6" height="3.8" fill="#e8201c"></rect>
<rect x="1694.1999999999998" y="424.5" width="5.6" height="1.7" fill="#6a6a6a"></rect>
<rect x="1700.6" y="424.5" width="7.4" height="1.7" fill="#8a8a8a"></rect>
<rect x="1686.6" y="429.4" width="6" height="3.8" fill="#e8201c"></rect>
<rect x="1694.1999999999998" y="430.4" width="5.6" height="1.7" fill="#6a6a6a"></rect>
<rect x="1700.6" y="430.4" width="9" height="1.7" fill="#8a8a8a"></rect>
<rect x="1773.2" y="417.6" width="6" height="3.8" fill="#2b7bc0"></rect>
<rect x="1780.8" y="418.6" width="5.6" height="1.7" fill="#6a6a6a"></rect>
<rect x="1787.2" y="418.6" width="7.4" height="1.7" fill="#8a8a8a"></rect>
<rect x="1773.2" y="423.5" width="6" height="3.8" fill="#e8201c"></rect>
<rect x="1780.8" y="424.5" width="5.6" height="1.7" fill="#6a6a6a"></rect>
<rect x="1787.2" y="424.5" width="7.4" height="1.7" fill="#8a8a8a"></rect>
<rect x="1773.2" y="429.4" width="6" height="3.8" fill="#e8201c"></rect>
<rect x="1780.8" y="430.4" width="5.6" height="1.7" fill="#6a6a6a"></rect>
<rect x="1787.2" y="430.4" width="9" height="1.7" fill="#8a8a8a"></rect>
<rect x="1501.6" y="437" width="36" height="1.8" fill="#777"></rect>
<rect x="1501.6" y="520.8" width="23" height="1.8" fill="#777"></rect>
<path d="M1513,493.2 L1858,493.2" stroke="#e8879a" stroke-width="0.8"></path>
<path d="M1513,500.6 L1858,500.6" stroke="#6cc04a" stroke-width="0.8"></path>
<path d="M1516.4,507 L1515,512.6" stroke="#a0204a" stroke-width="1.6"></path>
<rect x="1520" y="507.6" width="10" height="1.6" fill="#6a6a6a"></rect><rect x="1520" y="513.4" width="36" height="1.6" fill="#8a8a8a"></rect>
<circle cx="1699" cy="511.6" r="1.2" fill="#4aa040"></circle><circle cx="1699" cy="511.6" r="2.6" fill="none" stroke="#ddd" stroke-width="0.6"></circle>
<rect x="1704" y="507.6" width="6" height="1.6" fill="#6a6a6a"></rect><rect x="1704" y="513.4" width="16" height="1.6" fill="#8a8a8a"></rect>
<path d="M1513,585 L1858,585" stroke="#a9c6ea" stroke-width="0.9"></path>
<path d="M1514.4,596 L1515.2,592.4 L1518.4,592.4 L1519.2,596 Z" fill="#2b7bc0"></path>
<rect x="1522" y="592.6" width="12" height="1.7" fill="#7a7a7a"></rect>
<rect x="1668" y="592.6" width="12" height="1.7" fill="#8a8a8a"></rect>
<path d="M1691.6,595.6 L1693.8,591 L1696,595.6 Z" fill="#e02a1a"></path>
<rect x="1700" y="592.6" width="6" height="1.7" fill="#7a7a7a"></rect>
<rect x="1839" y="592.6" width="12" height="1.7" fill="#8a8a8a"></rect>
<path d="M1858.4,336 L1858.4,598" stroke="#a9c2e4" stroke-width="0.9"></path>
<path d="M1499,598.4 L1860,598.4" stroke="#8fb0e0" stroke-width="1"></path>
<rect x="1857" y="594" width="3.4" height="4" fill="#c9d6ea"></rect>
</g>
</svg>
<!--/SNAP-->
<!--MONITOR-->
<div class="abs" style="left:349px;top:646px;width:739px;height:330px;background:#fff;border:1px solid #9a9997;border-radius:3px 3px 0 0"></div>
<div class="abs" style="left:350px;top:647px;width:737px;height:56px;background:#e3e3e3"></div>
<div class="abs" style="left:350px;top:703px;width:737px;height:3.6px;background:#9a9895"></div>
<svg class="abs" style="left:367px;top:657px" width="44" height="40" viewBox="367 657 44 40">
<rect x="370" y="660" width="37.8" height="5.6" fill="#6b6a68"></rect>
<path d="M372.6,665.6 L372.6,683 Q372.6,685.2 374.8,685.2 L403,685.2 Q405.2,685.2 405.2,683 L405.2,665.6" fill="none" stroke="#6b6a68" stroke-width="1.7"></path>
<path d="M380,670 L390,670 M380,674.4 L399,674.4 M380,678.8 L395.2,678.8" stroke="#6b6a68" stroke-width="1.9"></path>
<path d="M388.9,685.4 L388.9,687.4" stroke="#6b6a68" stroke-width="1.5"></path>
<circle cx="388.9" cy="690" r="2.4" fill="none" stroke="#6b6a68" stroke-width="1.5"></circle>
</svg>
<span class="t" style="left: 421.5px; top: 666.4px; font-size: 20px; color: rgb(17, 17, 17); letter-spacing: 0.13px;">IPMI Monitor (All Parameters) 192.168.0.112</span>
<svg class="abs" style="left:1051px;top:656.3px" width="26" height="26" viewBox="-13 -13 26 26"><g transform="scale(0.82)" fill="none" stroke="#3a3a38" stroke-width="2" stroke-linejoin="round"><path d="M-2.52,-9.47 L-2.23,-13.01 L2.23,-13.01 L2.52,-9.47 A9.80,9.80 0 0 1 4.92,-8.48 L7.62,-10.78 L10.78,-7.62 L8.48,-4.92 A9.80,9.80 0 0 1 9.47,-2.52 L13.01,-2.23 L13.01,2.23 L9.47,2.52 A9.80,9.80 0 0 1 8.48,4.92 L10.78,7.62 L7.62,10.78 L4.92,8.48 A9.80,9.80 0 0 1 2.52,9.47 L2.23,13.01 L-2.23,13.01 L-2.52,9.47 A9.80,9.80 0 0 1 -4.92,8.48 L-7.62,10.78 L-10.78,7.62 L-8.48,4.92 A9.80,9.80 0 0 1 -9.47,2.52 L-13.01,2.23 L-13.01,-2.23 L-9.47,-2.52 A9.80,9.80 0 0 1 -8.48,-4.92 L-10.78,-7.62 L-7.62,-10.78 L-4.92,-8.48 A9.80,9.80 0 0 1 -2.52,-9.47 Z"></path><circle cx="0" cy="0" r="5"></circle></g></svg>

<div class="abs" style="left:350px;top:706.6px;width:737px;height:45.4px;background:#f6f6f6;border-bottom:1px solid #c2c2c2"></div>
<div class="abs" style="left:589px;top:707px;width:1px;height:44px;background:#bdbdbd"></div>
<div class="abs" style="left:829px;top:707px;width:1px;height:44px;background:#bdbdbd"></div>
<span class="t" style="left: 363px; top: 720.6px; font-size: 18px; color: rgb(85, 85, 85); font-weight: bold; letter-spacing: 0.09px;">Metric Name</span>
<span class="t" style="left: 681.5px; top: 720.6px; font-size: 18px; color: rgb(85, 85, 85); font-weight: bold; letter-spacing: 0.08px;">Status</span>
<span class="t" style="left: 994px; top: 720.6px; font-size: 18px; color: rgb(85, 85, 85); font-weight: bold; letter-spacing: -0.01px;">Value</span>
<span class="t" style="left: 363.5px; top: 766.4px; font-size: 17px; color: rgb(56, 56, 56); letter-spacing: 0.02px;">CPU1 Temp</span>
<span class="t" style="left: 681.5px; top: 767.2px; font-size: 17px; color: rgb(109, 179, 63); letter-spacing: 0.28px;">Normal</span>
<span class="t" style="left: 1013px; top: 766.4px; font-size: 17px; color: rgb(56, 56, 56); letter-spacing: -0.14px;">43 °C</span>
<div class="abs" style="left:350px;top:795px;width:718px;height:43px;background:#f9f9f9"></div>
<div class="abs" style="left:350px;top:795px;width:718px;height:1px;background:#e9e9e9"></div>
<span class="t" style="left: 363.5px; top: 809.7px; font-size: 17px; color: rgb(56, 56, 56); letter-spacing: 0.08px;">PCH Temp</span>
<span class="t" style="left: 681.5px; top: 810.5px; font-size: 17px; color: rgb(109, 179, 63); letter-spacing: 0.28px;">Normal</span>
<span class="t" style="left: 1013px; top: 809.7px; font-size: 17px; color: rgb(56, 56, 56); letter-spacing: -0.14px;">62 °C</span>
<div class="abs" style="left:350px;top:838px;width:718px;height:1px;background:#e9e9e9"></div>
<span class="t" style="left: 363.5px; top: 852.9px; font-size: 17px; color: rgb(56, 56, 56); letter-spacing: 0.44px;">System Temp</span>
<span class="t" style="left: 681.5px; top: 853.7px; font-size: 17px; color: rgb(109, 179, 63); letter-spacing: 0.28px;">Normal</span>
<span class="t" style="left: 1013px; top: 852.9px; font-size: 17px; color: rgb(56, 56, 56); letter-spacing: -0.14px;">38 °C</span>
<div class="abs" style="left:350px;top:882px;width:718px;height:43px;background:#f9f9f9"></div>
<div class="abs" style="left:350px;top:882px;width:718px;height:1px;background:#e9e9e9"></div>
<span class="t" style="left: 363.5px; top: 896.2px; font-size: 17px; color: rgb(56, 56, 56); letter-spacing: 0.3px;">Peripheral Temp</span>
<span class="t" style="left: 681.5px; top: 897px; font-size: 17px; color: rgb(109, 179, 63); letter-spacing: 0.28px;">Normal</span>
<span class="t" style="left: 1013px; top: 896.2px; font-size: 17px; color: rgb(56, 56, 56); letter-spacing: -0.14px;">62 °C</span>
<div class="abs" style="left:350px;top:925px;width:718px;height:1px;background:#e9e9e9"></div>
<span class="t" style="left: 363.5px; top: 939.4px; font-size: 17px; color: rgb(56, 56, 56); letter-spacing: 0.31px;">Vcpu1VRM Temp</span>
<span class="t" style="left: 681.5px; top: 940.2px; font-size: 17px; color: rgb(109, 179, 63); letter-spacing: 0.28px;">Normal</span>
<span class="t" style="left: 1013px; top: 939.4px; font-size: 17px; color: rgb(56, 56, 56); letter-spacing: -0.14px;">40 °C</span>
<div class="abs" style="left:589px;top:752px;width:1px;height:207px;background:#e6e6e6"></div>
<div class="abs" style="left:829px;top:752px;width:1px;height:207px;background:#e6e6e6"></div>
<div class="abs" style="left:1070px;top:752px;width:17px;height:206px;background:#f1f1f1"></div>
<div class="abs" style="left:1072px;top:769px;width:13px;height:50px;background:#c1c1c1"></div>
<div class="abs" style="left:1067px;top:752px;width:1px;height:206px;background:#ececec"></div><svg class="abs" style="left:1073.5px;top:758px" width="10" height="7"><path d="M1,5.6 L9,5.6 L5,1 Z" fill="#a3a3a3"></path></svg>
<!--CHART-->
<div class="abs" style="left:1100px;top:646px;width:739px;height:330px;background:#fff;border:1px solid #9a9997;border-radius:3px 3px 0 0"></div>
<div class="abs" style="left:1101px;top:647px;width:737px;height:56px;background:#e3e3e3"></div>
<div class="abs" style="left:1101px;top:703px;width:737px;height:5.6px;background:#9a9895"></div>
<svg class="abs" style="left:1119px;top:656px" width="42" height="40" viewBox="1119 656 42 40">
<path d="M1127,664 L1156,664 M1127,670.2 L1156,670.2 M1127,676.4 L1156,676.4" stroke="#d2d2d2" stroke-width="0.9"></path>
<path d="M1125,688.4 L1129.2,677.6 L1131.8,682.4 L1137.8,671 L1142,676.6 L1146,673.8 L1151.4,682.4 L1155.6,676.6 L1155.6,688.4 Z" fill="#676665"></path>
<path d="M1121.8,658.4 L1121.8,691.8 L1158.6,691.8" fill="none" stroke="#8c8b89" stroke-width="1.7"></path>
</svg>
<span class="t" style="left: 1173px; top: 666.4px; font-size: 20px; color: rgb(17, 17, 17); letter-spacing: -0.1px;">IPMI Monitor (Single Parameter - Live) - CPU1 Temp</span>
<svg class="abs" style="left:1772px;top:657px" width="26" height="26" viewBox="1772 657 26 26">
<path d="M1776.2,673.2 A8.8,8.8 0 1 1 1781.6,677.8" fill="none" stroke="#3a3a38" stroke-width="1.9"></path>
<path d="M1773.6,674.6 L1779.4,672.2 L1779,677.4 Z" fill="#3a3a38"></path>
<path d="M1786.8,663.4 L1784.4,669.8 L1789,672.2" fill="none" stroke="#2e2e2c" stroke-width="2.3" stroke-linejoin="miter"></path><path d="M1786.8,663.4 L1782.6,669.4 L1784.4,670.6 Z" fill="#2e2e2c"></path>
</svg>
<svg class="abs" style="left:1802px;top:655.8px" width="26" height="26" viewBox="-13 -13 26 26"><g transform="scale(0.82)" fill="none" stroke="#3a3a38" stroke-width="2" stroke-linejoin="round"><path d="M-2.52,-9.47 L-2.23,-13.01 L2.23,-13.01 L2.52,-9.47 A9.80,9.80 0 0 1 4.92,-8.48 L7.62,-10.78 L10.78,-7.62 L8.48,-4.92 A9.80,9.80 0 0 1 9.47,-2.52 L13.01,-2.23 L13.01,2.23 L9.47,2.52 A9.80,9.80 0 0 1 8.48,4.92 L10.78,7.62 L7.62,10.78 L4.92,8.48 A9.80,9.80 0 0 1 2.52,9.47 L2.23,13.01 L-2.23,13.01 L-2.52,9.47 A9.80,9.80 0 0 1 -4.92,8.48 L-7.62,10.78 L-10.78,7.62 L-8.48,4.92 A9.80,9.80 0 0 1 -9.47,2.52 L-13.01,2.23 L-13.01,-2.23 L-9.47,-2.52 A9.80,9.80 0 0 1 -8.48,-4.92 L-10.78,-7.62 L-7.62,-10.78 L-4.92,-8.48 A9.80,9.80 0 0 1 -2.52,-9.47 Z"></path><circle cx="0" cy="0" r="5"></circle></g></svg>

<span class="t" style="left: 1131.5px; top: 717.2px; font-size: 19px; color: rgb(34, 34, 34); letter-spacing: 0.61px;">192.168.0.112</span>
<svg class="abs" style="left:1110px;top:750px" width="725" height="208" viewBox="1110 750 725 208">
<g stroke="#dedede" stroke-width="1"><path d="M1175,761.8 L1820,761.8 M1175,798 L1820,798 M1175,834.2 L1820,834.2 M1175,870.4 L1820,870.4 M1175,906.6 L1820,906.6"></path></g>
<path d="M1175.5,942.5 L1175.5,852.6 L1186.5,850.4 L1290,850.4 L1296,850.9 L1304,852.4 L1316,850.7 L1328,852.4 L1340,852.4 L1352,850.7 L1388,850.7 L1400,852.4 L1412,850.7 L1424,850.7 L1436,852.4 L1448,850.7 L1460,852.4 L1472,850.7 L1496,850.7 L1508,852.4 L1520,850.7 L1688,850.7 L1700,848.7 L1722,848.7 L1734,852.6 L1746,850.9 L1758,850.9 L1770,848.7 L1782,850.7 L1820,850.7 L1820,942.5 Z" fill="#a8bd3b"></path>
<path d="M1175.5,852.6 L1186.5,850.4 L1290,850.4 L1296,850.9 L1304,852.4 L1316,850.7 L1328,852.4 L1340,852.4 L1352,850.7 L1388,850.7 L1400,852.4 L1412,850.7 L1424,850.7 L1436,852.4 L1448,850.7 L1460,852.4 L1472,850.7 L1496,850.7 L1508,852.4 L1520,850.7 L1688,850.7 L1700,848.7 L1722,848.7 L1734,852.6 L1746,850.9 L1758,850.9 L1770,848.7 L1782,850.7 L1820,850.7" fill="none" stroke="#7f9420" stroke-width="1.3"></path>
<g stroke="#98ab33" stroke-width="1" opacity="0.6"><path d="M1176,870.4 L1820,870.4 M1176,906.6 L1820,906.6"></path></g>
<path d="M1175.5,761 L1175.5,943" stroke="#111" stroke-width="1.6"></path>
<path d="M1170,942.6 L1820.6,942.6" stroke="#111" stroke-width="1.6"></path>
<g stroke="#333" stroke-width="1.6"><path d="M1170,761.8 L1175,761.8 M1170,798 L1175,798 M1170,834.2 L1175,834.2 M1170,870.4 L1175,870.4 M1170,906.6 L1175,906.6"></path>
<path d="M1175.5,943 L1175.5,948.6 M1211.3,943 L1211.3,948.6 M1247.2,943 L1247.2,948.6 M1283.0,943 L1283.0,948.6 M1318.8,943 L1318.8,948.6 M1354.7,943 L1354.7,948.6 M1390.5,943 L1390.5,948.6 M1426.3,943 L1426.3,948.6 M1462.1,943 L1462.1,948.6 M1498.0,943 L1498.0,948.6 M1533.8,943 L1533.8,948.6 M1569.6,943 L1569.6,948.6 M1605.5,943 L1605.5,948.6 M1641.3,943 L1641.3,948.6 M1677.1,943 L1677.1,948.6 M1712.9,943 L1712.9,948.6 M1748.8,943 L1748.8,948.6 M1784.6,943 L1784.6,948.6 M1820.4,943 L1820.4,948.6"></path></g>
<circle cx="1258.5" cy="850.6" r="7.2" fill="#98af14" stroke="#728710" stroke-width="1.3"></circle>
</svg>
<span class="t" style="left: 1149.5px; top: 753.6px; font-size: 16.5px; color: rgb(85, 85, 85); letter-spacing: 0.07px;">85</span>
<span class="t" style="left: 1149.5px; top: 789.8px; font-size: 16.5px; color: rgb(85, 85, 85); letter-spacing: 0.07px;">68</span>
<span class="t" style="left: 1149.5px; top: 826px; font-size: 16.5px; color: rgb(85, 85, 85); letter-spacing: 0.07px;">51</span>
<span class="t" style="left: 1149.5px; top: 862.2px; font-size: 16.5px; color: rgb(85, 85, 85); letter-spacing: 0.07px;">34</span>
<span class="t" style="left: 1149.5px; top: 898.4px; font-size: 16.5px; color: rgb(85, 85, 85); letter-spacing: 0.07px;">17</span>
<span class="t" style="left: 1154px; top: 934.4px; font-size: 16.5px; color: rgb(85, 85, 85); letter-spacing: 0.31px;">0</span>
<span class="t" style="left:1135px;top:856px;font-size:19px;color:#222;letter-spacing:0.35px;transform:translate(-50%,-50%) rotate(-90deg);transform-origin:50% 50%">Temperature (°C)</span>
<div class="abs" style="left:1102px;top:940px;width:736px;height:18px;overflow:hidden">
<span class="t" style="left: 44px; top: 13.5px; font-size: 16.5px; color: rgb(85, 85, 85); letter-spacing: -0.28px;">15:18:00</span>
<span class="t" style="left: 115.7px; top: 13.5px; font-size: 16.5px; color: rgb(85, 85, 85); letter-spacing: -0.28px;">15:19:00</span>
<span class="t" style="left: 187.3px; top: 13.5px; font-size: 16.5px; color: rgb(85, 85, 85); letter-spacing: -0.28px;">15:20:00</span>
<span class="t" style="left: 259px; top: 13.5px; font-size: 16.5px; color: rgb(85, 85, 85); letter-spacing: -0.28px;">15:21:00</span>
<span class="t" style="left: 330.6px; top: 13.5px; font-size: 16.5px; color: rgb(85, 85, 85); letter-spacing: -0.28px;">15:22:00</span>
<span class="t" style="left: 402.3px; top: 13.5px; font-size: 16.5px; color: rgb(85, 85, 85); letter-spacing: -0.28px;">15:23:00</span>
<span class="t" style="left: 474px; top: 13.5px; font-size: 16.5px; color: rgb(85, 85, 85); letter-spacing: -0.28px;">15:24:00</span>
<span class="t" style="left: 545.6px; top: 13.5px; font-size: 16.5px; color: rgb(85, 85, 85); letter-spacing: -0.28px;">15:25:00</span>
<span class="t" style="left: 617.3px; top: 13.5px; font-size: 16.5px; color: rgb(85, 85, 85); letter-spacing: -0.28px;">15:26:00</span>
<span class="t" style="left: 688.9px; top: 13.5px; font-size: 16.5px; color: rgb(85, 85, 85); letter-spacing: -0.28px;">15:27:00</span>
</div>

<!--MENUS-->
<div class="abs" style="left:1200.5px;top:179.5px;width:187.3px;height:110.5px;background:#fff;box-shadow:0 3px 7px rgba(0,0,0,0.32), 0 0 2px rgba(0,0,0,0.18)"></div>
<div class="abs" style="left:1202px;top:200px;width:184.6px;height:35px;background:#dcdcdc"></div>
<span class="t" style="left: 1226.5px; top: 211.6px; font-size: 16.5px; color: rgb(51, 51, 51); letter-spacing: -0.12px;">Power Control</span>
<span class="t" style="left: 1226.5px; top: 246.7px; font-size: 16.5px; color: rgb(51, 51, 51); letter-spacing: -0.1px;">Remote Desktop</span>
<svg class="abs" style="left:1371px;top:216.5px" width="10" height="13"><path d="M1.2,1.2 L8.6,6.5 L1.2,11.8 Z" fill="#8a8a8a"></path></svg>
<svg class="abs" style="left:1371px;top:251.5px" width="10" height="13"><path d="M1.2,1.2 L8.6,6.5 L1.2,11.8 Z" fill="#8a8a8a"></path></svg>
<div class="abs" style="left:1387.5px;top:201px;width:158.2px;height:181px;background:#fff;box-shadow:0 3px 7px rgba(0,0,0,0.32), 0 0 2px rgba(0,0,0,0.18)"></div>
<div class="abs" style="left:1388px;top:291px;width:157px;height:35px;background:#f9e793"></div>
<span class="t" style="left: 1431.5px; top: 232.8px; font-size: 16.5px; color: rgb(171, 171, 171); letter-spacing: -0.42px;">Power On</span>
<span class="t" style="left: 1431.5px; top: 267.8px; font-size: 16.5px; color: rgb(51, 51, 51); letter-spacing: -0.06px;">Power Off</span>
<span class="t" style="left: 1431.5px; top: 302.9px; font-size: 16.5px; color: rgb(51, 51, 51); letter-spacing: 0.04px;">Restart</span>
<span class="t" style="left: 1431.5px; top: 338px; font-size: 16.5px; color: rgb(51, 51, 51); letter-spacing: -0.09px;">Power cycle</span>
<div class="abs" style="left:1221.7px;top:142.5px;width:38.6px;height:38.6px;border-radius:50%;background:#d96443;box-shadow:0 1px 3px rgba(0,0,0,0.25)"></div>
<span class="t" style="left:1221.7px;top:151.5px;width:38.6px;text-align:center;font-size:20.5px;font-weight:bold;color:#fff">1</span>
<div class="abs" style="left:1157.7px;top:198.39999999999998px;width:38.6px;height:38.6px;border-radius:50%;background:#d96443;box-shadow:0 1px 3px rgba(0,0,0,0.25)"></div>
<span class="t" style="left:1157.7px;top:207.4px;width:38.6px;text-align:center;font-size:20.5px;font-weight:bold;color:#fff">2</span>
<div class="abs" style="left:1347.0px;top:287.4px;width:38.6px;height:38.6px;border-radius:50%;background:#d96443;box-shadow:0 1px 3px rgba(0,0,0,0.25)"></div>
<span class="t" style="left:1347.0px;top:296.4px;width:38.6px;text-align:center;font-size:20.5px;font-weight:bold;color:#fff">3</span>

<!--SCROLL-->
<div class="abs" style="left:1903px;top:193px;width:16px;height:765px;background:#f1f1f1"></div>
<div class="abs" style="left:1905px;top:203px;width:13px;height:596px;background:#c1c1c1"></div>
<svg class="abs" style="left:1906px;top:192px" width="11" height="8"><path d="M1.6,6.4 L9.4,6.4 L5.5,1.6 Z" fill="#a3a3a3"></path></svg>
<svg class="abs" style="left:1906px;top:946px" width="11" height="8"><path d="M1.6,1.6 L9.4,1.6 L5.5,6.4 Z" fill="#505050"></path></svg>
<div class="abs" style="left:312px;top:958px;width:1607px;height:16px;background:#f7f7f7"></div>

<!--STATUS-->
<div class="abs" style="left:-1px;top:952px;width:639px;height:24px;background:#f1f1f1;border:1px solid #cfcfcf;border-radius:0 4px 0 0"></div>
<span class="t" style="left: 2.5px; top: 957.5px; font-size: 12px; color: rgb(74, 74, 74); letter-spacing: 0.31px;">172.17.30.30:8080/qrmplus/#</span>



</body></html>
